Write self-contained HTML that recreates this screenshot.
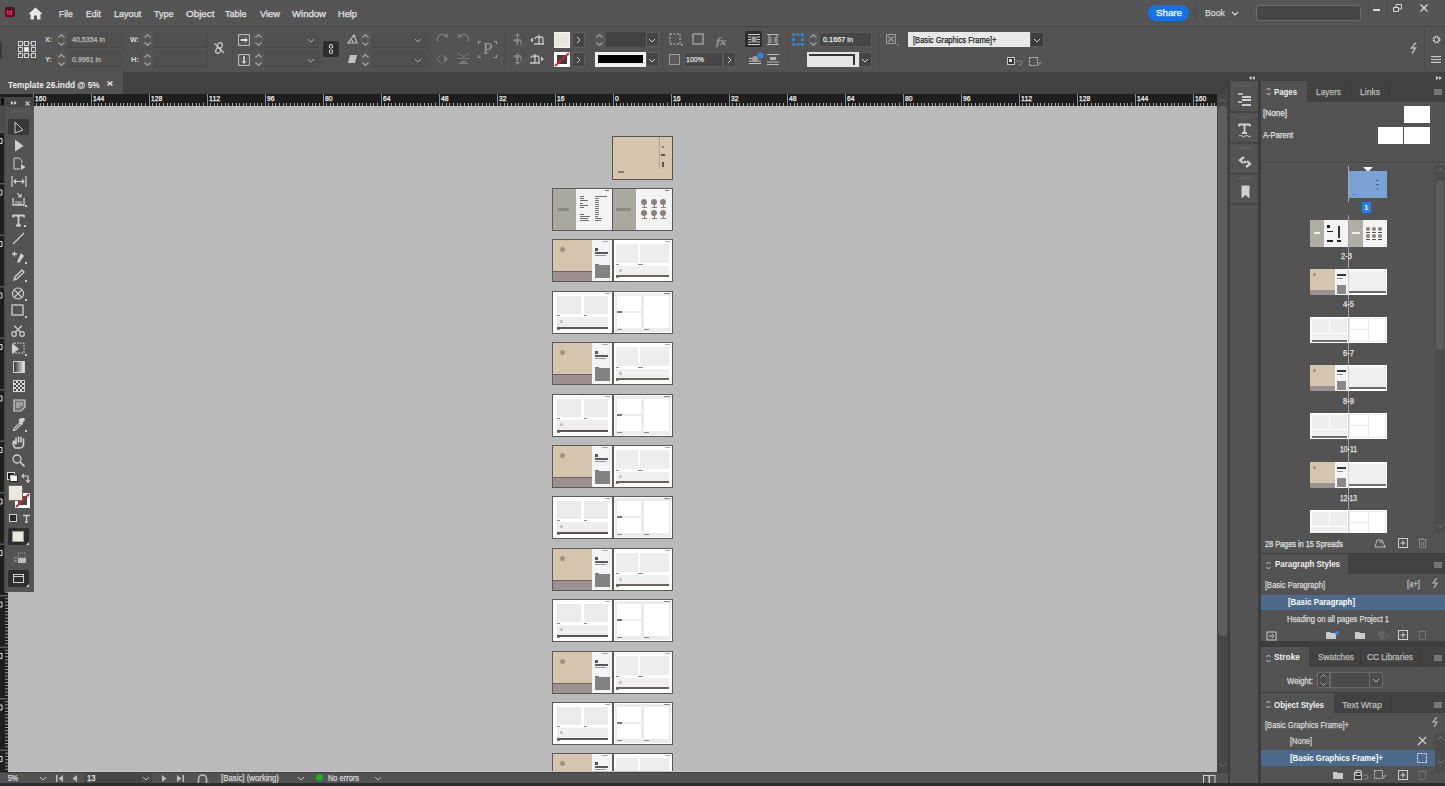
<!DOCTYPE html><html><head><meta charset="utf-8"><style>
*{margin:0;padding:0;box-sizing:border-box}
html,body{width:1445px;height:786px;overflow:hidden;background:#535353;font-family:"Liberation Sans",sans-serif;color:#d6d6d6;font-size:9px}
.a{position:absolute}
.t{position:absolute;white-space:nowrap;line-height:1;-webkit-text-stroke:0.25px currentColor}
</style></head><body>
<div class="a" style="left:0px;top:0px;width:1445px;height:26px;background:#555555;"></div>
<div class="a" style="left:0px;top:26px;width:1445px;height:1px;background:#464646;"></div>
<div class="a" style="left:5px;top:7px;width:10px;height:10px;background:#5e0b26;border-radius:2px"></div>
<div class="t" style="left:6.5px;top:10.00px;font-size:6.5px;color:#e0457a;font-weight:bold;-webkit-text-stroke:0;">Id</div>
<svg class="a" style="left:28px;top:7px;" width="15" height="13" viewBox="0 0 15 13"><path d="M7.5 0.5 L14.5 7 H12.5 V12.5 H9 V8.5 H6 V12.5 H2.5 V7 H0.5 Z" fill="#e6e6e6"/></svg>
<div class="t" style="left:59px;top:8.76px;font-size:9.5px;color:#e2e2e2;transform:scaleX(0.895);transform-origin:0 0;">File</div>
<div class="t" style="left:85.8px;top:8.76px;font-size:9.5px;color:#e2e2e2;transform:scaleX(0.904);transform-origin:0 0;">Edit</div>
<div class="t" style="left:113.6px;top:8.76px;font-size:9.5px;color:#e2e2e2;transform:scaleX(0.954);transform-origin:0 0;">Layout</div>
<div class="t" style="left:153.6px;top:8.76px;font-size:9.5px;color:#e2e2e2;transform:scaleX(0.947);transform-origin:0 0;">Type</div>
<div class="t" style="left:185.5px;top:8.76px;font-size:9.5px;color:#e2e2e2;transform:scaleX(1.038);transform-origin:0 0;">Object</div>
<div class="t" style="left:225px;top:8.76px;font-size:9.5px;color:#e2e2e2;transform:scaleX(0.947);transform-origin:0 0;">Table</div>
<div class="t" style="left:259.7px;top:8.76px;font-size:9.5px;color:#e2e2e2;transform:scaleX(0.979);transform-origin:0 0;">View</div>
<div class="t" style="left:292px;top:8.76px;font-size:9.5px;color:#e2e2e2;transform:scaleX(1.006);transform-origin:0 0;">Window</div>
<div class="t" style="left:338.3px;top:8.76px;font-size:9.5px;color:#e2e2e2;transform:scaleX(0.972);transform-origin:0 0;">Help</div>
<div class="a" style="left:1148px;top:5px;width:41px;height:16px;background:#1473e6;border-radius:8px"></div>
<div class="t" style="left:1155.5px;top:8.46px;font-size:9.5px;color:#ffffff;transform:scaleX(1.026);transform-origin:0 0;">Share</div>
<div class="a" style="left:1195px;top:4px;width:1px;height:18px;background:#4b4b4b;"></div>
<div class="t" style="left:1205px;top:8.46px;font-size:9.5px;color:#d8d8d8;transform:scaleX(0.924);transform-origin:0 0;">Book</div>
<svg class="a" style="left:1231px;top:11px;" width="8" height="5" viewBox="0 0 8 5"><path d="M1 1 L4 4 L7 1" stroke="#d8d8d8" stroke-width="1.2" fill="none"/></svg>
<div class="a" style="left:1250px;top:4px;width:1px;height:18px;background:#4b4b4b;"></div>
<div class="a" style="left:1256px;top:5px;width:105px;height:16px;background:#474747;border:1px solid #6c6c6c;border-radius:3px"></div>
<div class="a" style="left:1368px;top:1px;width:1px;height:14px;background:#4e4e4e;"></div>
<div class="a" style="left:1387px;top:1px;width:1px;height:14px;background:#4e4e4e;"></div>
<div class="a" style="left:1410px;top:1px;width:1px;height:14px;background:#4e4e4e;"></div>
<div class="a" style="left:1373px;top:9px;width:7px;height:2px;background:#d8d8d8;"></div>
<svg class="a" style="left:1393px;top:4px;" width="9" height="8" viewBox="0 0 9 8"><path d="M0.5 3.5 h5 v4 h-5z M3 3.5 v-3 h5.5 v4.5 h-3" stroke="#d8d8d8" stroke-width="1" fill="none"/></svg>
<svg class="a" style="left:1420px;top:4px;" width="8" height="8" viewBox="0 0 8 8"><path d="M0.5 0.5 L7.5 7.5 M7.5 0.5 L0.5 7.5" stroke="#d8d8d8" stroke-width="1.3"/></svg>
<div class="a" style="left:0px;top:27px;width:1445px;height:45px;background:#535353;"></div>
<div class="a" style="left:0px;top:41px;width:2px;height:18px;background:#3c3c3c;"></div>
<svg class="a" style="left:17.5px;top:41.0px;" width="5" height="5" viewBox="0 0 5 5"><rect x="0.5" y="0.5" width="4" height="4" stroke="#d0d0d0" stroke-width="1" fill="none"/></svg>
<svg class="a" style="left:17.5px;top:47.0px;" width="5" height="5" viewBox="0 0 5 5"><rect x="0.5" y="0.5" width="4" height="4" stroke="#d0d0d0" stroke-width="1" fill="none"/></svg>
<svg class="a" style="left:17.5px;top:53.0px;" width="5" height="5" viewBox="0 0 5 5"><rect x="0.5" y="0.5" width="4" height="4" stroke="#d0d0d0" stroke-width="1" fill="none"/></svg>
<svg class="a" style="left:24.2px;top:41.0px;" width="5" height="5" viewBox="0 0 5 5"><rect x="0.5" y="0.5" width="4" height="4" stroke="#d0d0d0" stroke-width="1" fill="none"/></svg>
<svg class="a" style="left:24.2px;top:47.0px;" width="5" height="5" viewBox="0 0 5 5"><rect x="0.5" y="0.5" width="4" height="4" stroke="#d0d0d0" stroke-width="1" fill="#ffffff"/></svg>
<svg class="a" style="left:24.2px;top:53.0px;" width="5" height="5" viewBox="0 0 5 5"><rect x="0.5" y="0.5" width="4" height="4" stroke="#d0d0d0" stroke-width="1" fill="none"/></svg>
<svg class="a" style="left:30.9px;top:41.0px;" width="5" height="5" viewBox="0 0 5 5"><rect x="0.5" y="0.5" width="4" height="4" stroke="#d0d0d0" stroke-width="1" fill="none"/></svg>
<svg class="a" style="left:30.9px;top:47.0px;" width="5" height="5" viewBox="0 0 5 5"><rect x="0.5" y="0.5" width="4" height="4" stroke="#d0d0d0" stroke-width="1" fill="none"/></svg>
<svg class="a" style="left:30.9px;top:53.0px;" width="5" height="5" viewBox="0 0 5 5"><rect x="0.5" y="0.5" width="4" height="4" stroke="#d0d0d0" stroke-width="1" fill="none"/></svg>
<svg class="a" style="left:17px;top:40px;" width="20" height="20" viewBox="0 0 20 20"><path d="M5 3h2 M12 3h2 M5 15h2 M12 15h2 M3 6v1 M3 12v1 M16 6v1 M16 12v1" stroke="#bbb" stroke-width="1"/></svg>
<div class="t" style="left:44.5px;top:36.23px;font-size:8px;color:#d8d8d8;font-weight:bold;-webkit-text-stroke:0;transform:scaleX(0.875);transform-origin:0 0;">X:</div>
<div class="t" style="left:44.5px;top:56.23px;font-size:8px;color:#d8d8d8;font-weight:bold;-webkit-text-stroke:0;transform:scaleX(0.945);transform-origin:0 0;">Y:</div>
<div class="a" style="left:56px;top:32px;width:11px;height:14px;background:#575757;border-radius:2px"></div>
<svg class="a" style="left:58px;top:34px;" width="7" height="4" viewBox="0 0 7 4"><path d="M0.5 3.5 L3.5 0.7 L6.5 3.5" stroke="#a8a8a8" stroke-width="1.1" fill="none"/></svg>
<svg class="a" style="left:58px;top:41.5px;" width="7" height="4" viewBox="0 0 7 4"><path d="M0.5 0.5 L3.5 3.3 L6.5 0.5" stroke="#a8a8a8" stroke-width="1.1" fill="none"/></svg>
<div class="a" style="left:56px;top:52px;width:11px;height:14px;background:#575757;border-radius:2px"></div>
<svg class="a" style="left:58px;top:54px;" width="7" height="4" viewBox="0 0 7 4"><path d="M0.5 3.5 L3.5 0.7 L6.5 3.5" stroke="#a8a8a8" stroke-width="1.1" fill="none"/></svg>
<svg class="a" style="left:58px;top:61.5px;" width="7" height="4" viewBox="0 0 7 4"><path d="M0.5 0.5 L3.5 3.3 L6.5 0.5" stroke="#a8a8a8" stroke-width="1.1" fill="none"/></svg>
<div class="a" style="left:67px;top:31.5px;width:54px;height:16px;background:#505050;border-bottom:1.5px solid #474747;border-right:1px solid #4c4c4c"></div>
<div class="a" style="left:67px;top:51px;width:54px;height:16px;background:#505050;border-bottom:1.5px solid #474747;border-right:1px solid #4c4c4c"></div>
<div class="t" style="left:72px;top:36.23px;font-size:8px;color:#bcbcbc;transform:scaleX(0.883);transform-origin:0 0;">40.5354 in</div>
<div class="t" style="left:72px;top:56.23px;font-size:8px;color:#bcbcbc;transform:scaleX(0.881);transform-origin:0 0;">0.9961 in</div>
<div class="t" style="left:130px;top:36.23px;font-size:8px;color:#d8d8d8;font-weight:bold;-webkit-text-stroke:0;transform:scaleX(0.894);transform-origin:0 0;">W:</div>
<div class="t" style="left:130.5px;top:56.23px;font-size:8px;color:#d8d8d8;font-weight:bold;-webkit-text-stroke:0;transform:scaleX(0.948);transform-origin:0 0;">H:</div>
<div class="a" style="left:142px;top:32px;width:11px;height:14px;background:#575757;border-radius:2px"></div>
<svg class="a" style="left:144px;top:34px;" width="7" height="4" viewBox="0 0 7 4"><path d="M0.5 3.5 L3.5 0.7 L6.5 3.5" stroke="#a8a8a8" stroke-width="1.1" fill="none"/></svg>
<svg class="a" style="left:144px;top:41.5px;" width="7" height="4" viewBox="0 0 7 4"><path d="M0.5 0.5 L3.5 3.3 L6.5 0.5" stroke="#a8a8a8" stroke-width="1.1" fill="none"/></svg>
<div class="a" style="left:142px;top:52px;width:11px;height:14px;background:#575757;border-radius:2px"></div>
<svg class="a" style="left:144px;top:54px;" width="7" height="4" viewBox="0 0 7 4"><path d="M0.5 3.5 L3.5 0.7 L6.5 3.5" stroke="#a8a8a8" stroke-width="1.1" fill="none"/></svg>
<svg class="a" style="left:144px;top:61.5px;" width="7" height="4" viewBox="0 0 7 4"><path d="M0.5 0.5 L3.5 3.3 L6.5 0.5" stroke="#a8a8a8" stroke-width="1.1" fill="none"/></svg>
<div class="a" style="left:153px;top:31.5px;width:54px;height:16px;background:#505050;border-bottom:1.5px solid #474747;border-right:1px solid #4c4c4c"></div>
<div class="a" style="left:153px;top:51px;width:54px;height:16px;background:#505050;border-bottom:1.5px solid #474747;border-right:1px solid #4c4c4c"></div>
<div class="a" style="left:207px;top:30px;width:1px;height:39px;background:#4c4c4c;"></div>
<svg class="a" style="left:212px;top:41px;" width="14" height="14" viewBox="0 0 14 14"><g transform="rotate(20 7 7)"><rect x="4.8" y="1.5" width="4.4" height="5.6" rx="2.2" stroke="#c8c8c8" stroke-width="1.2" fill="none"/><rect x="4.8" y="6.9" width="4.4" height="5.6" rx="2.2" stroke="#c8c8c8" stroke-width="1.2" fill="none"/></g><path d="M2.5 2.5 L12 12" stroke="#c8c8c8" stroke-width="1.3"/></svg>
<div class="a" style="left:232px;top:30px;width:1px;height:39px;background:#4c4c4c;"></div>
<svg class="a" style="left:238px;top:34px;" width="12" height="12" viewBox="0 0 12 12"><rect x="0.6" y="0.6" width="10.8" height="10.8" stroke="#bdbdbd" stroke-width="1.1" fill="#4a4a4a"/><path d="M2.5 6h5.5" stroke="#e0e0e0" stroke-width="2"/><path d="M7.5 3.5 L10 6 L7.5 8.5 Z" fill="#e0e0e0"/><path d="M2.5 3h7 M2.5 9h7" stroke="#777" stroke-width="0.8"/></svg>
<svg class="a" style="left:238px;top:54px;" width="12" height="12" viewBox="0 0 12 12"><rect x="0.6" y="0.6" width="10.8" height="10.8" stroke="#bdbdbd" stroke-width="1.1" fill="#4a4a4a"/><path d="M6 2v6" stroke="#e0e0e0" stroke-width="1.6"/><path d="M3.5 7.5 L6 10 L8.5 7.5 Z" fill="#e0e0e0"/><path d="M3 2.5v7 M9 2.5v7" stroke="#777" stroke-width="0.8"/></svg>
<div class="a" style="left:253px;top:32px;width:11px;height:14px;background:#575757;border-radius:2px"></div>
<svg class="a" style="left:255px;top:34px;" width="7" height="4" viewBox="0 0 7 4"><path d="M0.5 3.5 L3.5 0.7 L6.5 3.5" stroke="#a8a8a8" stroke-width="1.1" fill="none"/></svg>
<svg class="a" style="left:255px;top:41.5px;" width="7" height="4" viewBox="0 0 7 4"><path d="M0.5 0.5 L3.5 3.3 L6.5 0.5" stroke="#a8a8a8" stroke-width="1.1" fill="none"/></svg>
<div class="a" style="left:253px;top:52px;width:11px;height:14px;background:#575757;border-radius:2px"></div>
<svg class="a" style="left:255px;top:54px;" width="7" height="4" viewBox="0 0 7 4"><path d="M0.5 3.5 L3.5 0.7 L6.5 3.5" stroke="#a8a8a8" stroke-width="1.1" fill="none"/></svg>
<svg class="a" style="left:255px;top:61.5px;" width="7" height="4" viewBox="0 0 7 4"><path d="M0.5 0.5 L3.5 3.3 L6.5 0.5" stroke="#a8a8a8" stroke-width="1.1" fill="none"/></svg>
<div class="a" style="left:264px;top:31.5px;width:55px;height:16px;background:#505050;border-bottom:1.5px solid #474747;border-right:1px solid #4c4c4c"></div>
<div class="a" style="left:264px;top:51px;width:55px;height:16px;background:#505050;border-bottom:1.5px solid #474747;border-right:1px solid #4c4c4c"></div>
<svg class="a" style="left:307px;top:38px;" width="8" height="5" viewBox="0 0 8 5"><path d="M1 1 L4 4 L7 1" stroke="#a8a8a8" stroke-width="1.0" fill="none"/></svg>
<svg class="a" style="left:307px;top:58px;" width="8" height="5" viewBox="0 0 8 5"><path d="M1 1 L4 4 L7 1" stroke="#a8a8a8" stroke-width="1.0" fill="none"/></svg>
<div class="a" style="left:323px;top:41px;width:16px;height:16px;background:#2e2e2e;border-radius:2px"></div>
<svg class="a" style="left:327px;top:43px;" width="8" height="12" viewBox="0 0 8 12"><path d="M2.5 5 V3 a1.5 1.5 0 0 1 3 0 V5 M2.5 7 V9 a1.5 1.5 0 0 0 3 0 V7 M4 4.5 V7.5" stroke="#d8d8d8" stroke-width="1.1" fill="none"/></svg>
<svg class="a" style="left:347px;top:34px;" width="11" height="10" viewBox="0 0 11 10"><path d="M1 9 L10 9 L7 1 Z M6 9 a3 3 0 0 0 -1.5 -3" stroke="#c0c0c0" stroke-width="1.2" fill="none"/></svg>
<svg class="a" style="left:347px;top:54px;" width="11" height="10" viewBox="0 0 11 10"><path d="M3 1 H10 L8 9 H1 Z" fill="#c0c0c0"/></svg>
<div class="a" style="left:360px;top:32px;width:11px;height:14px;background:#575757;border-radius:2px"></div>
<svg class="a" style="left:362px;top:34px;" width="7" height="4" viewBox="0 0 7 4"><path d="M0.5 3.5 L3.5 0.7 L6.5 3.5" stroke="#a8a8a8" stroke-width="1.1" fill="none"/></svg>
<svg class="a" style="left:362px;top:41.5px;" width="7" height="4" viewBox="0 0 7 4"><path d="M0.5 0.5 L3.5 3.3 L6.5 0.5" stroke="#a8a8a8" stroke-width="1.1" fill="none"/></svg>
<div class="a" style="left:360px;top:52px;width:11px;height:14px;background:#575757;border-radius:2px"></div>
<svg class="a" style="left:362px;top:54px;" width="7" height="4" viewBox="0 0 7 4"><path d="M0.5 3.5 L3.5 0.7 L6.5 3.5" stroke="#a8a8a8" stroke-width="1.1" fill="none"/></svg>
<svg class="a" style="left:362px;top:61.5px;" width="7" height="4" viewBox="0 0 7 4"><path d="M0.5 0.5 L3.5 3.3 L6.5 0.5" stroke="#a8a8a8" stroke-width="1.1" fill="none"/></svg>
<div class="a" style="left:371px;top:31.5px;width:55px;height:16px;background:#505050;border-bottom:1.5px solid #474747;border-right:1px solid #4c4c4c"></div>
<div class="a" style="left:371px;top:51px;width:55px;height:16px;background:#505050;border-bottom:1.5px solid #474747;border-right:1px solid #4c4c4c"></div>
<svg class="a" style="left:414px;top:38px;" width="8" height="5" viewBox="0 0 8 5"><path d="M1 1 L4 4 L7 1" stroke="#a8a8a8" stroke-width="1.0" fill="none"/></svg>
<svg class="a" style="left:414px;top:58px;" width="8" height="5" viewBox="0 0 8 5"><path d="M1 1 L4 4 L7 1" stroke="#a8a8a8" stroke-width="1.0" fill="none"/></svg>
<div class="a" style="left:428px;top:30px;width:1px;height:39px;background:#4c4c4c;"></div>
<svg class="a" style="left:436px;top:33px;" width="13" height="10" viewBox="0 0 13 10"><path d="M2 9 A5 5 0 0 1 11 4 M8 3.5 L11.5 4 L11 0.5" stroke="#7c7c7c" stroke-width="1.3" fill="none"/></svg>
<svg class="a" style="left:457px;top:33px;" width="13" height="10" viewBox="0 0 13 10"><path d="M11 9 A5 5 0 0 0 2 4 M5 3.5 L1.5 4 L2 0.5" stroke="#7c7c7c" stroke-width="1.3" fill="none"/></svg>
<svg class="a" style="left:436px;top:54px;" width="13" height="10" viewBox="0 0 13 10"><path d="M5 1 L1 5 L5 9" stroke="#7c7c7c" fill="none"/><path d="M8 1 L12 5 L8 9 Z" fill="#7c7c7c"/></svg>
<svg class="a" style="left:457px;top:52px;" width="13" height="13" viewBox="0 0 13 13"><path d="M1 1 L6.5 5 L12 1" stroke="#7c7c7c" fill="none"/><path d="M1 12 L6.5 8 L12 12 Z" fill="#7c7c7c"/><path d="M0 6.5h13" stroke="#7c7c7c"/></svg>
<svg class="a" style="left:477px;top:40px;" width="21" height="20" viewBox="0 0 21 20"><path d="M1.5 4 V1.5 H4 M17 1.5 H19.5 V4 M1.5 15 V17.5 H4 M17 17.5 H19.5 V15" stroke="#9a9a9a" stroke-width="1.2" fill="none"/></svg>
<div class="t" style="left:483px;top:39.5px;font-size:17px;color:#9a9a9a;font-family:'Liberation Serif',serif;-webkit-text-stroke:0">P</div>
<div class="a" style="left:505px;top:30px;width:1px;height:39px;background:#4c4c4c;"></div>
<svg class="a" style="left:511px;top:33px;" width="13" height="13" viewBox="0 0 13 13"><path d="M6.5 0 L9 3 H4 Z" fill="#8c8c8c"/><path d="M6.5 3 V12 M3 8 a1.5 1.5 0 0 1 3 0 v4 M7 8 a1.5 1.5 0 0 1 3 0 v4 M2.5 8h8" stroke="#8c8c8c" stroke-width="1.1" fill="none"/></svg>
<svg class="a" style="left:511px;top:52px;" width="13" height="13" viewBox="0 0 13 13"><path d="M6.5 13 L9 10 H4 Z" fill="#8c8c8c"/><path d="M6.5 1 V10 M3 5 a1.5 1.5 0 0 1 3 0 v4 M7 5 a1.5 1.5 0 0 1 3 0 v4 M2.5 5h8" stroke="#8c8c8c" stroke-width="1.1" fill="none"/></svg>
<svg class="a" style="left:530px;top:35px;" width="14" height="10" viewBox="0 0 14 10"><path d="M0 5 L3 2.5 V7.5 Z" fill="#c8c8c8"/><path d="M5 4 a2 2 0 0 1 4 0 v5 M9 4 a2 2 0 0 1 4 0 v5 M9 0 v9 M4 9 h10" stroke="#c8c8c8" stroke-width="1.3" fill="none"/></svg>
<svg class="a" style="left:530px;top:54px;" width="14" height="10" viewBox="0 0 14 10"><path d="M14 5 L11 2.5 V7.5 Z" fill="#c8c8c8"/><path d="M1 4 a2 2 0 0 1 4 0 v5 M5 4 a2 2 0 0 1 4 0 v5 M5 0 v9 M0 9 h10" stroke="#c8c8c8" stroke-width="1.3" fill="none"/></svg>
<div class="a" style="left:554px;top:32px;width:16px;height:16px;background:#f3f3f3;"></div>
<div class="a" style="left:555px;top:33px;width:14px;height:14px;background:#e9e6dc;"></div>
<div class="a" style="left:554px;top:52px;width:16px;height:15px;background:#ffffff;"></div>
<div class="a" style="left:557px;top:55px;width:10px;height:9px;background:#3e3e3e;"></div>
<svg class="a" style="left:554px;top:52px;" width="16" height="15" viewBox="0 0 16 15"><path d="M1 14 L15 1" stroke="#d61f2c" stroke-width="1.8"/></svg>
<div class="a" style="left:572px;top:32px;width:13px;height:16px;background:#464646;border:1px solid #5e5e5e;border-radius:2px"></div>
<div class="a" style="left:572px;top:52px;width:13px;height:15px;background:#464646;border:1px solid #5e5e5e;border-radius:2px"></div>
<svg class="a" style="left:576px;top:36px;" width="5" height="8" viewBox="0 0 5 8"><path d="M1 1 L4 4 L1 7" stroke="#cfcfcf" fill="none"/></svg>
<svg class="a" style="left:576px;top:56px;" width="5" height="8" viewBox="0 0 5 8"><path d="M1 1 L4 4 L1 7" stroke="#cfcfcf" fill="none"/></svg>
<div class="a" style="left:594px;top:32px;width:11px;height:15px;background:#575757;border-radius:2px"></div>
<svg class="a" style="left:596px;top:34px;" width="7" height="4" viewBox="0 0 7 4"><path d="M0.5 3.5 L3.5 0.7 L6.5 3.5" stroke="#a8a8a8" stroke-width="1.1" fill="none"/></svg>
<svg class="a" style="left:596px;top:41.5px;" width="7" height="4" viewBox="0 0 7 4"><path d="M0.5 0.5 L3.5 3.3 L6.5 0.5" stroke="#a8a8a8" stroke-width="1.1" fill="none"/></svg>
<div class="a" style="left:606px;top:32px;width:40px;height:15px;background:#424242;"></div>
<div class="a" style="left:646px;top:32px;width:13px;height:15px;background:#464646;border:1px solid #5e5e5e"></div>
<svg class="a" style="left:648px;top:38px;" width="8" height="5" viewBox="0 0 8 5"><path d="M1 1 L4 4 L7 1" stroke="#cfcfcf" stroke-width="1.0" fill="none"/></svg>
<div class="a" style="left:595px;top:52px;width:51px;height:15px;background:#f0f0f0;"></div>
<div class="a" style="left:598px;top:55px;width:45px;height:7.5px;background:#000000;"></div>
<div class="a" style="left:646px;top:52px;width:13px;height:15px;background:#464646;border:1px solid #5e5e5e"></div>
<svg class="a" style="left:648px;top:58px;" width="8" height="5" viewBox="0 0 8 5"><path d="M1 1 L4 4 L7 1" stroke="#cfcfcf" stroke-width="1.0" fill="none"/></svg>
<div class="a" style="left:662px;top:30px;width:1px;height:39px;background:#4c4c4c;"></div>
<svg class="a" style="left:669px;top:33px;" width="14" height="13" viewBox="0 0 14 13"><rect x="1" y="1" width="10" height="10" stroke="#c8c8c8" stroke-dasharray="2 1.5" fill="none"/><rect x="12" y="11" width="1.5" height="1.5" fill="#c8c8c8"/></svg>
<svg class="a" style="left:692px;top:33px;" width="12" height="12" viewBox="0 0 12 12"><rect x="1" y="1" width="10" height="10" stroke="#b0b0b0" stroke-width="1.2" fill="none"/></svg>
<div class="t" style="left:716px;top:35.69px;font-size:11px;color:#9a9a9a;transform:scaleX(1.286);transform-origin:0 0;font-style:italic;font-family:'Liberation Serif',serif">fx</div>
<svg class="a" style="left:669px;top:54px;" width="11" height="11" viewBox="0 0 11 11"><rect x="0.5" y="0.5" width="10" height="10" stroke="#9a9a9a" fill="#5a5a5a"/></svg>
<div class="a" style="left:684px;top:52px;width:39px;height:15px;background:#464646;border:1px solid #5a5a5a"></div>
<div class="t" style="left:686px;top:55.73px;font-size:8px;color:#e0e0e0;transform:scaleX(0.880);transform-origin:0 0;">100%</div>
<div class="a" style="left:723px;top:52px;width:13px;height:15px;background:#464646;border:1px solid #5a5a5a"></div>
<svg class="a" style="left:727px;top:56px;" width="5" height="8" viewBox="0 0 5 8"><path d="M1 1 L4 4 L1 7" stroke="#cfcfcf" fill="none"/></svg>
<div class="a" style="left:741px;top:30px;width:1px;height:39px;background:#4c4c4c;"></div>
<div class="a" style="left:745px;top:31px;width:17px;height:16px;background:#2e2e2e;border-radius:2px"></div>
<svg class="a" style="left:748px;top:34px;" width="12" height="11" viewBox="0 0 12 11"><path d="M0 0.5h12 M0 10.5h12 M0 3h3 M9 3h3 M0 5.5h3 M9 5.5h3 M0 8h3 M9 8h3" stroke="#d0d0d0"/><rect x="3.5" y="2.5" width="5" height="6" fill="#9a9a9a"/></svg>
<svg class="a" style="left:767px;top:34px;" width="12" height="11" viewBox="0 0 12 11"><path d="M0 0.5h12 M0 10.5h12 M2 1v9 M10 1v9 M4 3v6 M8 3v6" stroke="#b8b8b8"/></svg>
<svg class="a" style="left:749px;top:52px;" width="15" height="13" viewBox="0 0 15 13"><path d="M0 6.5h3 M0 9h12 M0 11.5h12" stroke="#c0c0c0"/><circle cx="6" cy="7" r="3" fill="#a0a0a0"/><circle cx="11.5" cy="3.5" r="3" fill="#2e86f0"/></svg>
<svg class="a" style="left:767px;top:54px;" width="12" height="11" viewBox="0 0 12 11"><path d="M0 0.5h12 M0 10.5h12 M0 8h12" stroke="#b8b8b8"/><rect x="3" y="3" width="6" height="3" fill="#b8b8b8"/></svg>
<div class="a" style="left:788px;top:30px;width:1px;height:39px;background:#4c4c4c;"></div>
<svg class="a" style="left:792px;top:33px;" width="12" height="13" viewBox="0 0 12 13"><path d="M2 2h8v9h-8z" stroke="#3d6f9c" fill="none"/><rect x="0" y="0" width="3" height="3" fill="#2f80d0"/><rect x="9" y="0" width="3" height="3" fill="#2f80d0"/><rect x="0" y="10" width="3" height="3" fill="#2f80d0"/><rect x="9" y="10" width="3" height="3" fill="#2f80d0"/><rect x="4.5" y="0" width="3" height="3" fill="#2f80d0"/><rect x="4.5" y="10" width="3" height="3" fill="#2f80d0"/><rect x="0" y="5" width="3" height="3" fill="#2f80d0"/><rect x="9" y="5" width="3" height="3" fill="#2f80d0"/></svg>
<div class="a" style="left:808px;top:32px;width:11px;height:15px;background:#575757;border-radius:2px"></div>
<svg class="a" style="left:810px;top:34px;" width="7" height="4" viewBox="0 0 7 4"><path d="M0.5 3.5 L3.5 0.7 L6.5 3.5" stroke="#a8a8a8" stroke-width="1.1" fill="none"/></svg>
<svg class="a" style="left:810px;top:41.5px;" width="7" height="4" viewBox="0 0 7 4"><path d="M0.5 0.5 L3.5 3.3 L6.5 0.5" stroke="#a8a8a8" stroke-width="1.1" fill="none"/></svg>
<div class="a" style="left:819px;top:32px;width:53px;height:15px;background:#464646;border:1px solid #5a5a5a"></div>
<div class="t" style="left:823px;top:36.23px;font-size:8px;color:#e6e6e6;transform:scaleX(0.911);transform-origin:0 0;">0.1667 in</div>
<div class="a" style="left:807px;top:52px;width:52px;height:15px;background:#e6e6e6;"></div>
<div class="a" style="left:809px;top:54px;width:46px;height:2px;background:#333;"></div>
<div class="a" style="left:853px;top:54px;width:2px;height:11px;background:#333;"></div>
<div class="a" style="left:859px;top:52px;width:13px;height:15px;background:#464646;border:1px solid #5a5a5a"></div>
<svg class="a" style="left:861px;top:58px;" width="8" height="5" viewBox="0 0 8 5"><path d="M1 1 L4 4 L7 1" stroke="#cfcfcf" stroke-width="1.0" fill="none"/></svg>
<div class="a" style="left:878px;top:30px;width:1px;height:39px;background:#4c4c4c;"></div>
<svg class="a" style="left:886px;top:34px;" width="13" height="12" viewBox="0 0 13 12"><rect x="0.5" y="0.5" width="9" height="9" stroke="#9a9a9a" fill="none"/><path d="M2 2 L8 8 M8 2 L2 8" stroke="#9a9a9a" stroke-width="1.3"/><rect x="11" y="10" width="1.5" height="1.5" fill="#9a9a9a"/></svg>
<div class="a" style="left:908px;top:32px;width:122px;height:15px;background:#e8e8e8;"></div>
<div class="t" style="left:913px;top:36.30px;font-size:8.5px;color:#1e1e1e;transform:scaleX(0.891);transform-origin:0 0;">[Basic Graphics Frame]+</div>
<div class="a" style="left:1030px;top:32px;width:14px;height:15px;background:#3e3e3e;border:1px solid #5a5a5a"></div>
<svg class="a" style="left:1033px;top:38px;" width="8" height="5" viewBox="0 0 8 5"><path d="M1 1 L4 4 L7 1" stroke="#cfcfcf" stroke-width="1.0" fill="none"/></svg>
<svg class="a" style="left:1007px;top:57px;" width="16" height="10" viewBox="0 0 16 10"><rect x="0.5" y="0.5" width="7" height="7" stroke="#c8c8c8" fill="#333"/><rect x="2" y="2" width="3" height="3" fill="#ddd"/><path d="M9 4h4 a2 2 0 0 1 0 4 h-2" stroke="#888" fill="none"/></svg>
<svg class="a" style="left:1029px;top:57px;" width="13" height="10" viewBox="0 0 13 10"><rect x="0.5" y="0.5" width="8" height="8" stroke="#c8c8c8" stroke-dasharray="2 1" fill="none"/><path d="M9 8 L12 5" stroke="#888" stroke-width="1.5"/></svg>
<svg class="a" style="left:1410px;top:42px;" width="8" height="12" viewBox="0 0 8 12"><path d="M6 0.5 L1.5 6 L5.5 6 L2 11.5" stroke="#bdbdbd" stroke-width="1.4" fill="none"/></svg>
<div class="a" style="left:1424px;top:30px;width:1px;height:40px;background:#4a4a4a;"></div>
<svg class="a" style="left:1432px;top:35px;" width="9" height="9" viewBox="0 0 9 9"><circle cx="4.5" cy="4.5" r="2.8" stroke="#d0d0d0" stroke-width="2.2" fill="none" stroke-dasharray="1.5 0.7"/><circle cx="4.5" cy="4.5" r="1.2" fill="#535353"/></svg>
<svg class="a" style="left:1431px;top:56px;" width="10" height="7" viewBox="0 0 10 7"><path d="M0 0.7h10 M0 3.5h10 M0 6.3h10" stroke="#c4c4c4" stroke-width="1.2"/></svg>
<div class="a" style="left:0px;top:72px;width:1228px;height:22px;background:#424242;"></div>
<div class="a" style="left:0px;top:72px;width:123px;height:22px;background:#535353;"></div>
<div class="t" style="left:8.2px;top:79.96px;font-size:9.5px;color:#ececec;font-weight:bold;-webkit-text-stroke:0;transform:scaleX(0.872);transform-origin:0 0;">Template 26.indd @ 5%</div>
<svg class="a" style="left:107px;top:81px;" width="6" height="5" viewBox="0 0 6 5"><path d="M0.5 0.5 L5.5 4.5 M5.5 0.5 L0.5 4.5" stroke="#e6e6e6" stroke-width="1.4"/></svg>
<div class="a" style="left:0px;top:94px;width:1217px;height:12px;background:#1f1f1f;"></div>
<div class="a" style="left:0px;top:94px;width:8px;height:678px;background:#1f1f1f;"></div>
<div class="a" style="left:0px;top:106px;width:5px;height:26px;background:#4d4d4d;"></div>
<svg class="a" style="left:0px;top:0px;" width="8" height="786" viewBox="0 0 8 786"><rect x="0" y="131.5" width="8" height="1.5" fill="#5a5a5a"/><path d="M-1 138.5 h3 v5 h-3" stroke="#e0e0e0" stroke-width="1" fill="none"/><rect x="5" y="134.7" width="3" height="1" fill="#9a9a9a"/><rect x="5" y="137.9" width="3" height="1" fill="#9a9a9a"/><rect x="5" y="141.2" width="3" height="1" fill="#9a9a9a"/><rect x="5" y="144.4" width="3" height="1" fill="#9a9a9a"/><rect x="5" y="147.6" width="3" height="1" fill="#9a9a9a"/><rect x="5" y="150.8" width="3" height="1" fill="#9a9a9a"/><rect x="5" y="154.0" width="3" height="1" fill="#9a9a9a"/><rect x="5" y="157.2" width="3" height="1" fill="#9a9a9a"/><rect x="5" y="160.5" width="3" height="1" fill="#9a9a9a"/><rect x="5" y="163.7" width="3" height="1" fill="#9a9a9a"/><rect x="5" y="166.9" width="3" height="1" fill="#9a9a9a"/><rect x="5" y="170.1" width="3" height="1" fill="#9a9a9a"/><rect x="5" y="173.3" width="3" height="1" fill="#9a9a9a"/><rect x="5" y="176.6" width="3" height="1" fill="#9a9a9a"/><rect x="5" y="179.8" width="3" height="1" fill="#9a9a9a"/><rect x="0" y="183.0" width="8" height="1.5" fill="#5a5a5a"/><path d="M-1 190.0 h3 v5 h-3" stroke="#e0e0e0" stroke-width="1" fill="none"/><rect x="5" y="186.2" width="3" height="1" fill="#9a9a9a"/><rect x="5" y="189.4" width="3" height="1" fill="#9a9a9a"/><rect x="5" y="192.7" width="3" height="1" fill="#9a9a9a"/><rect x="5" y="195.9" width="3" height="1" fill="#9a9a9a"/><rect x="5" y="199.1" width="3" height="1" fill="#9a9a9a"/><rect x="5" y="202.3" width="3" height="1" fill="#9a9a9a"/><rect x="5" y="205.5" width="3" height="1" fill="#9a9a9a"/><rect x="5" y="208.8" width="3" height="1" fill="#9a9a9a"/><rect x="5" y="212.0" width="3" height="1" fill="#9a9a9a"/><rect x="5" y="215.2" width="3" height="1" fill="#9a9a9a"/><rect x="5" y="218.4" width="3" height="1" fill="#9a9a9a"/><rect x="5" y="221.6" width="3" height="1" fill="#9a9a9a"/><rect x="5" y="224.8" width="3" height="1" fill="#9a9a9a"/><rect x="5" y="228.1" width="3" height="1" fill="#9a9a9a"/><rect x="5" y="231.3" width="3" height="1" fill="#9a9a9a"/><rect x="0" y="234.5" width="8" height="1.5" fill="#5a5a5a"/><path d="M-1 241.5 h3 v5 h-3" stroke="#e0e0e0" stroke-width="1" fill="none"/><rect x="5" y="237.7" width="3" height="1" fill="#9a9a9a"/><rect x="5" y="240.9" width="3" height="1" fill="#9a9a9a"/><rect x="5" y="244.2" width="3" height="1" fill="#9a9a9a"/><rect x="5" y="247.4" width="3" height="1" fill="#9a9a9a"/><rect x="5" y="250.6" width="3" height="1" fill="#9a9a9a"/><rect x="5" y="253.8" width="3" height="1" fill="#9a9a9a"/><rect x="5" y="257.0" width="3" height="1" fill="#9a9a9a"/><rect x="5" y="260.2" width="3" height="1" fill="#9a9a9a"/><rect x="5" y="263.5" width="3" height="1" fill="#9a9a9a"/><rect x="5" y="266.7" width="3" height="1" fill="#9a9a9a"/><rect x="5" y="269.9" width="3" height="1" fill="#9a9a9a"/><rect x="5" y="273.1" width="3" height="1" fill="#9a9a9a"/><rect x="5" y="276.3" width="3" height="1" fill="#9a9a9a"/><rect x="5" y="279.6" width="3" height="1" fill="#9a9a9a"/><rect x="5" y="282.8" width="3" height="1" fill="#9a9a9a"/><rect x="0" y="286.0" width="8" height="1.5" fill="#5a5a5a"/><path d="M-1 293.0 h3 v5 h-3" stroke="#e0e0e0" stroke-width="1" fill="none"/><rect x="5" y="289.2" width="3" height="1" fill="#9a9a9a"/><rect x="5" y="292.4" width="3" height="1" fill="#9a9a9a"/><rect x="5" y="295.7" width="3" height="1" fill="#9a9a9a"/><rect x="5" y="298.9" width="3" height="1" fill="#9a9a9a"/><rect x="5" y="302.1" width="3" height="1" fill="#9a9a9a"/><rect x="5" y="305.3" width="3" height="1" fill="#9a9a9a"/><rect x="5" y="308.5" width="3" height="1" fill="#9a9a9a"/><rect x="5" y="311.8" width="3" height="1" fill="#9a9a9a"/><rect x="5" y="315.0" width="3" height="1" fill="#9a9a9a"/><rect x="5" y="318.2" width="3" height="1" fill="#9a9a9a"/><rect x="5" y="321.4" width="3" height="1" fill="#9a9a9a"/><rect x="5" y="324.6" width="3" height="1" fill="#9a9a9a"/><rect x="5" y="327.8" width="3" height="1" fill="#9a9a9a"/><rect x="5" y="331.1" width="3" height="1" fill="#9a9a9a"/><rect x="5" y="334.3" width="3" height="1" fill="#9a9a9a"/><rect x="0" y="337.5" width="8" height="1.5" fill="#5a5a5a"/><path d="M-1 344.5 h3 v5 h-3" stroke="#e0e0e0" stroke-width="1" fill="none"/><rect x="5" y="340.7" width="3" height="1" fill="#9a9a9a"/><rect x="5" y="343.9" width="3" height="1" fill="#9a9a9a"/><rect x="5" y="347.2" width="3" height="1" fill="#9a9a9a"/><rect x="5" y="350.4" width="3" height="1" fill="#9a9a9a"/><rect x="5" y="353.6" width="3" height="1" fill="#9a9a9a"/><rect x="5" y="356.8" width="3" height="1" fill="#9a9a9a"/><rect x="5" y="360.0" width="3" height="1" fill="#9a9a9a"/><rect x="5" y="363.2" width="3" height="1" fill="#9a9a9a"/><rect x="5" y="366.5" width="3" height="1" fill="#9a9a9a"/><rect x="5" y="369.7" width="3" height="1" fill="#9a9a9a"/><rect x="5" y="372.9" width="3" height="1" fill="#9a9a9a"/><rect x="5" y="376.1" width="3" height="1" fill="#9a9a9a"/><rect x="5" y="379.3" width="3" height="1" fill="#9a9a9a"/><rect x="5" y="382.6" width="3" height="1" fill="#9a9a9a"/><rect x="5" y="385.8" width="3" height="1" fill="#9a9a9a"/><rect x="0" y="389.0" width="8" height="1.5" fill="#5a5a5a"/><path d="M-1 396.0 h3 v5 h-3" stroke="#e0e0e0" stroke-width="1" fill="none"/><rect x="5" y="392.2" width="3" height="1" fill="#9a9a9a"/><rect x="5" y="395.4" width="3" height="1" fill="#9a9a9a"/><rect x="5" y="398.7" width="3" height="1" fill="#9a9a9a"/><rect x="5" y="401.9" width="3" height="1" fill="#9a9a9a"/><rect x="5" y="405.1" width="3" height="1" fill="#9a9a9a"/><rect x="5" y="408.3" width="3" height="1" fill="#9a9a9a"/><rect x="5" y="411.5" width="3" height="1" fill="#9a9a9a"/><rect x="5" y="414.8" width="3" height="1" fill="#9a9a9a"/><rect x="5" y="418.0" width="3" height="1" fill="#9a9a9a"/><rect x="5" y="421.2" width="3" height="1" fill="#9a9a9a"/><rect x="5" y="424.4" width="3" height="1" fill="#9a9a9a"/><rect x="5" y="427.6" width="3" height="1" fill="#9a9a9a"/><rect x="5" y="430.8" width="3" height="1" fill="#9a9a9a"/><rect x="5" y="434.1" width="3" height="1" fill="#9a9a9a"/><rect x="5" y="437.3" width="3" height="1" fill="#9a9a9a"/><rect x="0" y="440.5" width="8" height="1.5" fill="#5a5a5a"/><path d="M-1 447.5 h3 v5 h-3" stroke="#e0e0e0" stroke-width="1" fill="none"/><rect x="5" y="443.7" width="3" height="1" fill="#9a9a9a"/><rect x="5" y="446.9" width="3" height="1" fill="#9a9a9a"/><rect x="5" y="450.2" width="3" height="1" fill="#9a9a9a"/><rect x="5" y="453.4" width="3" height="1" fill="#9a9a9a"/><rect x="5" y="456.6" width="3" height="1" fill="#9a9a9a"/><rect x="5" y="459.8" width="3" height="1" fill="#9a9a9a"/><rect x="5" y="463.0" width="3" height="1" fill="#9a9a9a"/><rect x="5" y="466.2" width="3" height="1" fill="#9a9a9a"/><rect x="5" y="469.5" width="3" height="1" fill="#9a9a9a"/><rect x="5" y="472.7" width="3" height="1" fill="#9a9a9a"/><rect x="5" y="475.9" width="3" height="1" fill="#9a9a9a"/><rect x="5" y="479.1" width="3" height="1" fill="#9a9a9a"/><rect x="5" y="482.3" width="3" height="1" fill="#9a9a9a"/><rect x="5" y="485.6" width="3" height="1" fill="#9a9a9a"/><rect x="5" y="488.8" width="3" height="1" fill="#9a9a9a"/><rect x="0" y="492.0" width="8" height="1.5" fill="#5a5a5a"/><path d="M-1 499.0 h3 v5 h-3" stroke="#e0e0e0" stroke-width="1" fill="none"/><rect x="5" y="495.2" width="3" height="1" fill="#9a9a9a"/><rect x="5" y="498.4" width="3" height="1" fill="#9a9a9a"/><rect x="5" y="501.7" width="3" height="1" fill="#9a9a9a"/><rect x="5" y="504.9" width="3" height="1" fill="#9a9a9a"/><rect x="5" y="508.1" width="3" height="1" fill="#9a9a9a"/><rect x="5" y="511.3" width="3" height="1" fill="#9a9a9a"/><rect x="5" y="514.5" width="3" height="1" fill="#9a9a9a"/><rect x="5" y="517.8" width="3" height="1" fill="#9a9a9a"/><rect x="5" y="521.0" width="3" height="1" fill="#9a9a9a"/><rect x="5" y="524.2" width="3" height="1" fill="#9a9a9a"/><rect x="5" y="527.4" width="3" height="1" fill="#9a9a9a"/><rect x="5" y="530.6" width="3" height="1" fill="#9a9a9a"/><rect x="5" y="533.8" width="3" height="1" fill="#9a9a9a"/><rect x="5" y="537.1" width="3" height="1" fill="#9a9a9a"/><rect x="5" y="540.3" width="3" height="1" fill="#9a9a9a"/><rect x="0" y="543.5" width="8" height="1.5" fill="#5a5a5a"/><path d="M-1 550.5 h3 v5 h-3" stroke="#e0e0e0" stroke-width="1" fill="none"/><rect x="5" y="546.7" width="3" height="1" fill="#9a9a9a"/><rect x="5" y="549.9" width="3" height="1" fill="#9a9a9a"/><rect x="5" y="553.2" width="3" height="1" fill="#9a9a9a"/><rect x="5" y="556.4" width="3" height="1" fill="#9a9a9a"/><rect x="5" y="559.6" width="3" height="1" fill="#9a9a9a"/><rect x="5" y="562.8" width="3" height="1" fill="#9a9a9a"/><rect x="5" y="566.0" width="3" height="1" fill="#9a9a9a"/><rect x="5" y="569.2" width="3" height="1" fill="#9a9a9a"/><rect x="5" y="572.5" width="3" height="1" fill="#9a9a9a"/><rect x="5" y="575.7" width="3" height="1" fill="#9a9a9a"/><rect x="5" y="578.9" width="3" height="1" fill="#9a9a9a"/><rect x="5" y="582.1" width="3" height="1" fill="#9a9a9a"/><rect x="5" y="585.3" width="3" height="1" fill="#9a9a9a"/><rect x="5" y="588.6" width="3" height="1" fill="#9a9a9a"/><rect x="5" y="591.8" width="3" height="1" fill="#9a9a9a"/><rect x="0" y="595.0" width="8" height="1.5" fill="#5a5a5a"/><path d="M-1 602.0 h3 v5 h-3" stroke="#e0e0e0" stroke-width="1" fill="none"/><rect x="5" y="598.2" width="3" height="1" fill="#9a9a9a"/><rect x="5" y="601.4" width="3" height="1" fill="#9a9a9a"/><rect x="5" y="604.7" width="3" height="1" fill="#9a9a9a"/><rect x="5" y="607.9" width="3" height="1" fill="#9a9a9a"/><rect x="5" y="611.1" width="3" height="1" fill="#9a9a9a"/><rect x="5" y="614.3" width="3" height="1" fill="#9a9a9a"/><rect x="5" y="617.5" width="3" height="1" fill="#9a9a9a"/><rect x="5" y="620.8" width="3" height="1" fill="#9a9a9a"/><rect x="5" y="624.0" width="3" height="1" fill="#9a9a9a"/><rect x="5" y="627.2" width="3" height="1" fill="#9a9a9a"/><rect x="5" y="630.4" width="3" height="1" fill="#9a9a9a"/><rect x="5" y="633.6" width="3" height="1" fill="#9a9a9a"/><rect x="5" y="636.8" width="3" height="1" fill="#9a9a9a"/><rect x="5" y="640.1" width="3" height="1" fill="#9a9a9a"/><rect x="5" y="643.3" width="3" height="1" fill="#9a9a9a"/><rect x="0" y="646.5" width="8" height="1.5" fill="#5a5a5a"/><path d="M-1 653.5 h3 v5 h-3" stroke="#e0e0e0" stroke-width="1" fill="none"/><rect x="5" y="649.7" width="3" height="1" fill="#9a9a9a"/><rect x="5" y="652.9" width="3" height="1" fill="#9a9a9a"/><rect x="5" y="656.2" width="3" height="1" fill="#9a9a9a"/><rect x="5" y="659.4" width="3" height="1" fill="#9a9a9a"/><rect x="5" y="662.6" width="3" height="1" fill="#9a9a9a"/><rect x="5" y="665.8" width="3" height="1" fill="#9a9a9a"/><rect x="5" y="669.0" width="3" height="1" fill="#9a9a9a"/><rect x="5" y="672.2" width="3" height="1" fill="#9a9a9a"/><rect x="5" y="675.5" width="3" height="1" fill="#9a9a9a"/><rect x="5" y="678.7" width="3" height="1" fill="#9a9a9a"/><rect x="5" y="681.9" width="3" height="1" fill="#9a9a9a"/><rect x="5" y="685.1" width="3" height="1" fill="#9a9a9a"/><rect x="5" y="688.3" width="3" height="1" fill="#9a9a9a"/><rect x="5" y="691.6" width="3" height="1" fill="#9a9a9a"/><rect x="5" y="694.8" width="3" height="1" fill="#9a9a9a"/><rect x="0" y="698.0" width="8" height="1.5" fill="#5a5a5a"/><path d="M-1 705.0 h3 v5 h-3" stroke="#e0e0e0" stroke-width="1" fill="none"/><rect x="5" y="701.2" width="3" height="1" fill="#9a9a9a"/><rect x="5" y="704.4" width="3" height="1" fill="#9a9a9a"/><rect x="5" y="707.7" width="3" height="1" fill="#9a9a9a"/><rect x="5" y="710.9" width="3" height="1" fill="#9a9a9a"/><rect x="5" y="714.1" width="3" height="1" fill="#9a9a9a"/><rect x="5" y="717.3" width="3" height="1" fill="#9a9a9a"/><rect x="5" y="720.5" width="3" height="1" fill="#9a9a9a"/><rect x="5" y="723.8" width="3" height="1" fill="#9a9a9a"/><rect x="5" y="727.0" width="3" height="1" fill="#9a9a9a"/><rect x="5" y="730.2" width="3" height="1" fill="#9a9a9a"/><rect x="5" y="733.4" width="3" height="1" fill="#9a9a9a"/><rect x="5" y="736.6" width="3" height="1" fill="#9a9a9a"/><rect x="5" y="739.8" width="3" height="1" fill="#9a9a9a"/><rect x="5" y="743.1" width="3" height="1" fill="#9a9a9a"/><rect x="5" y="746.3" width="3" height="1" fill="#9a9a9a"/><rect x="0" y="749.5" width="8" height="1.5" fill="#5a5a5a"/><path d="M-1 756.5 h3 v5 h-3" stroke="#e0e0e0" stroke-width="1" fill="none"/><rect x="5" y="752.7" width="3" height="1" fill="#9a9a9a"/><rect x="5" y="755.9" width="3" height="1" fill="#9a9a9a"/><rect x="5" y="759.2" width="3" height="1" fill="#9a9a9a"/><rect x="5" y="762.4" width="3" height="1" fill="#9a9a9a"/><rect x="5" y="765.6" width="3" height="1" fill="#9a9a9a"/><rect x="5" y="768.8" width="3" height="1" fill="#9a9a9a"/></svg>
<svg class="a" style="left:0px;top:94px;" width="1217" height="12" viewBox="0 0 1217 12"><rect x="33" y="0" width="1" height="12" fill="#8a8a8a"/><rect x="36" y="9" width="1" height="3" fill="#a8a8a8"/><rect x="40" y="9" width="1" height="3" fill="#a8a8a8"/><rect x="43" y="9" width="1" height="3" fill="#a8a8a8"/><rect x="47" y="9" width="1" height="3" fill="#a8a8a8"/><rect x="51" y="9" width="1" height="3" fill="#a8a8a8"/><rect x="54" y="9" width="1" height="3" fill="#a8a8a8"/><rect x="58" y="9" width="1" height="3" fill="#a8a8a8"/><rect x="62" y="9" width="1" height="3" fill="#a8a8a8"/><rect x="65" y="9" width="1" height="3" fill="#a8a8a8"/><rect x="69" y="9" width="1" height="3" fill="#a8a8a8"/><rect x="72" y="9" width="1" height="3" fill="#a8a8a8"/><rect x="76" y="9" width="1" height="3" fill="#a8a8a8"/><rect x="80" y="9" width="1" height="3" fill="#a8a8a8"/><rect x="83" y="9" width="1" height="3" fill="#a8a8a8"/><rect x="87" y="9" width="1" height="3" fill="#a8a8a8"/><rect x="91" y="0" width="1" height="12" fill="#8a8a8a"/><rect x="94" y="9" width="1" height="3" fill="#a8a8a8"/><rect x="98" y="9" width="1" height="3" fill="#a8a8a8"/><rect x="101" y="9" width="1" height="3" fill="#a8a8a8"/><rect x="105" y="9" width="1" height="3" fill="#a8a8a8"/><rect x="109" y="9" width="1" height="3" fill="#a8a8a8"/><rect x="112" y="9" width="1" height="3" fill="#a8a8a8"/><rect x="116" y="9" width="1" height="3" fill="#a8a8a8"/><rect x="120" y="9" width="1" height="3" fill="#a8a8a8"/><rect x="123" y="9" width="1" height="3" fill="#a8a8a8"/><rect x="127" y="9" width="1" height="3" fill="#a8a8a8"/><rect x="130" y="9" width="1" height="3" fill="#a8a8a8"/><rect x="134" y="9" width="1" height="3" fill="#a8a8a8"/><rect x="138" y="9" width="1" height="3" fill="#a8a8a8"/><rect x="141" y="9" width="1" height="3" fill="#a8a8a8"/><rect x="145" y="9" width="1" height="3" fill="#a8a8a8"/><rect x="149" y="0" width="1" height="12" fill="#8a8a8a"/><rect x="152" y="9" width="1" height="3" fill="#a8a8a8"/><rect x="156" y="9" width="1" height="3" fill="#a8a8a8"/><rect x="159" y="9" width="1" height="3" fill="#a8a8a8"/><rect x="163" y="9" width="1" height="3" fill="#a8a8a8"/><rect x="167" y="9" width="1" height="3" fill="#a8a8a8"/><rect x="170" y="9" width="1" height="3" fill="#a8a8a8"/><rect x="174" y="9" width="1" height="3" fill="#a8a8a8"/><rect x="178" y="9" width="1" height="3" fill="#a8a8a8"/><rect x="181" y="9" width="1" height="3" fill="#a8a8a8"/><rect x="185" y="9" width="1" height="3" fill="#a8a8a8"/><rect x="188" y="9" width="1" height="3" fill="#a8a8a8"/><rect x="192" y="9" width="1" height="3" fill="#a8a8a8"/><rect x="196" y="9" width="1" height="3" fill="#a8a8a8"/><rect x="199" y="9" width="1" height="3" fill="#a8a8a8"/><rect x="203" y="9" width="1" height="3" fill="#a8a8a8"/><rect x="207" y="0" width="1" height="12" fill="#8a8a8a"/><rect x="210" y="9" width="1" height="3" fill="#a8a8a8"/><rect x="214" y="9" width="1" height="3" fill="#a8a8a8"/><rect x="217" y="9" width="1" height="3" fill="#a8a8a8"/><rect x="221" y="9" width="1" height="3" fill="#a8a8a8"/><rect x="225" y="9" width="1" height="3" fill="#a8a8a8"/><rect x="228" y="9" width="1" height="3" fill="#a8a8a8"/><rect x="232" y="9" width="1" height="3" fill="#a8a8a8"/><rect x="236" y="9" width="1" height="3" fill="#a8a8a8"/><rect x="239" y="9" width="1" height="3" fill="#a8a8a8"/><rect x="243" y="9" width="1" height="3" fill="#a8a8a8"/><rect x="246" y="9" width="1" height="3" fill="#a8a8a8"/><rect x="250" y="9" width="1" height="3" fill="#a8a8a8"/><rect x="254" y="9" width="1" height="3" fill="#a8a8a8"/><rect x="257" y="9" width="1" height="3" fill="#a8a8a8"/><rect x="261" y="9" width="1" height="3" fill="#a8a8a8"/><rect x="265" y="0" width="1" height="12" fill="#8a8a8a"/><rect x="268" y="9" width="1" height="3" fill="#a8a8a8"/><rect x="272" y="9" width="1" height="3" fill="#a8a8a8"/><rect x="275" y="9" width="1" height="3" fill="#a8a8a8"/><rect x="279" y="9" width="1" height="3" fill="#a8a8a8"/><rect x="283" y="9" width="1" height="3" fill="#a8a8a8"/><rect x="286" y="9" width="1" height="3" fill="#a8a8a8"/><rect x="290" y="9" width="1" height="3" fill="#a8a8a8"/><rect x="294" y="9" width="1" height="3" fill="#a8a8a8"/><rect x="297" y="9" width="1" height="3" fill="#a8a8a8"/><rect x="301" y="9" width="1" height="3" fill="#a8a8a8"/><rect x="304" y="9" width="1" height="3" fill="#a8a8a8"/><rect x="308" y="9" width="1" height="3" fill="#a8a8a8"/><rect x="312" y="9" width="1" height="3" fill="#a8a8a8"/><rect x="315" y="9" width="1" height="3" fill="#a8a8a8"/><rect x="319" y="9" width="1" height="3" fill="#a8a8a8"/><rect x="323" y="0" width="1" height="12" fill="#8a8a8a"/><rect x="326" y="9" width="1" height="3" fill="#a8a8a8"/><rect x="330" y="9" width="1" height="3" fill="#a8a8a8"/><rect x="333" y="9" width="1" height="3" fill="#a8a8a8"/><rect x="337" y="9" width="1" height="3" fill="#a8a8a8"/><rect x="341" y="9" width="1" height="3" fill="#a8a8a8"/><rect x="344" y="9" width="1" height="3" fill="#a8a8a8"/><rect x="348" y="9" width="1" height="3" fill="#a8a8a8"/><rect x="352" y="9" width="1" height="3" fill="#a8a8a8"/><rect x="355" y="9" width="1" height="3" fill="#a8a8a8"/><rect x="359" y="9" width="1" height="3" fill="#a8a8a8"/><rect x="362" y="9" width="1" height="3" fill="#a8a8a8"/><rect x="366" y="9" width="1" height="3" fill="#a8a8a8"/><rect x="370" y="9" width="1" height="3" fill="#a8a8a8"/><rect x="373" y="9" width="1" height="3" fill="#a8a8a8"/><rect x="377" y="9" width="1" height="3" fill="#a8a8a8"/><rect x="381" y="0" width="1" height="12" fill="#8a8a8a"/><rect x="384" y="9" width="1" height="3" fill="#a8a8a8"/><rect x="388" y="9" width="1" height="3" fill="#a8a8a8"/><rect x="391" y="9" width="1" height="3" fill="#a8a8a8"/><rect x="395" y="9" width="1" height="3" fill="#a8a8a8"/><rect x="399" y="9" width="1" height="3" fill="#a8a8a8"/><rect x="402" y="9" width="1" height="3" fill="#a8a8a8"/><rect x="406" y="9" width="1" height="3" fill="#a8a8a8"/><rect x="410" y="9" width="1" height="3" fill="#a8a8a8"/><rect x="413" y="9" width="1" height="3" fill="#a8a8a8"/><rect x="417" y="9" width="1" height="3" fill="#a8a8a8"/><rect x="420" y="9" width="1" height="3" fill="#a8a8a8"/><rect x="424" y="9" width="1" height="3" fill="#a8a8a8"/><rect x="428" y="9" width="1" height="3" fill="#a8a8a8"/><rect x="431" y="9" width="1" height="3" fill="#a8a8a8"/><rect x="435" y="9" width="1" height="3" fill="#a8a8a8"/><rect x="439" y="0" width="1" height="12" fill="#8a8a8a"/><rect x="442" y="9" width="1" height="3" fill="#a8a8a8"/><rect x="446" y="9" width="1" height="3" fill="#a8a8a8"/><rect x="449" y="9" width="1" height="3" fill="#a8a8a8"/><rect x="453" y="9" width="1" height="3" fill="#a8a8a8"/><rect x="457" y="9" width="1" height="3" fill="#a8a8a8"/><rect x="460" y="9" width="1" height="3" fill="#a8a8a8"/><rect x="464" y="9" width="1" height="3" fill="#a8a8a8"/><rect x="468" y="9" width="1" height="3" fill="#a8a8a8"/><rect x="471" y="9" width="1" height="3" fill="#a8a8a8"/><rect x="475" y="9" width="1" height="3" fill="#a8a8a8"/><rect x="478" y="9" width="1" height="3" fill="#a8a8a8"/><rect x="482" y="9" width="1" height="3" fill="#a8a8a8"/><rect x="486" y="9" width="1" height="3" fill="#a8a8a8"/><rect x="489" y="9" width="1" height="3" fill="#a8a8a8"/><rect x="493" y="9" width="1" height="3" fill="#a8a8a8"/><rect x="497" y="0" width="1" height="12" fill="#8a8a8a"/><rect x="500" y="9" width="1" height="3" fill="#a8a8a8"/><rect x="504" y="9" width="1" height="3" fill="#a8a8a8"/><rect x="507" y="9" width="1" height="3" fill="#a8a8a8"/><rect x="511" y="9" width="1" height="3" fill="#a8a8a8"/><rect x="515" y="9" width="1" height="3" fill="#a8a8a8"/><rect x="518" y="9" width="1" height="3" fill="#a8a8a8"/><rect x="522" y="9" width="1" height="3" fill="#a8a8a8"/><rect x="526" y="9" width="1" height="3" fill="#a8a8a8"/><rect x="529" y="9" width="1" height="3" fill="#a8a8a8"/><rect x="533" y="9" width="1" height="3" fill="#a8a8a8"/><rect x="536" y="9" width="1" height="3" fill="#a8a8a8"/><rect x="540" y="9" width="1" height="3" fill="#a8a8a8"/><rect x="544" y="9" width="1" height="3" fill="#a8a8a8"/><rect x="547" y="9" width="1" height="3" fill="#a8a8a8"/><rect x="551" y="9" width="1" height="3" fill="#a8a8a8"/><rect x="555" y="0" width="1" height="12" fill="#8a8a8a"/><rect x="558" y="9" width="1" height="3" fill="#a8a8a8"/><rect x="562" y="9" width="1" height="3" fill="#a8a8a8"/><rect x="565" y="9" width="1" height="3" fill="#a8a8a8"/><rect x="569" y="9" width="1" height="3" fill="#a8a8a8"/><rect x="573" y="9" width="1" height="3" fill="#a8a8a8"/><rect x="576" y="9" width="1" height="3" fill="#a8a8a8"/><rect x="580" y="9" width="1" height="3" fill="#a8a8a8"/><rect x="584" y="9" width="1" height="3" fill="#a8a8a8"/><rect x="587" y="9" width="1" height="3" fill="#a8a8a8"/><rect x="591" y="9" width="1" height="3" fill="#a8a8a8"/><rect x="594" y="9" width="1" height="3" fill="#a8a8a8"/><rect x="598" y="9" width="1" height="3" fill="#a8a8a8"/><rect x="602" y="9" width="1" height="3" fill="#a8a8a8"/><rect x="605" y="9" width="1" height="3" fill="#a8a8a8"/><rect x="609" y="9" width="1" height="3" fill="#a8a8a8"/><rect x="613" y="0" width="1" height="12" fill="#8a8a8a"/><rect x="616" y="9" width="1" height="3" fill="#a8a8a8"/><rect x="620" y="9" width="1" height="3" fill="#a8a8a8"/><rect x="623" y="9" width="1" height="3" fill="#a8a8a8"/><rect x="627" y="9" width="1" height="3" fill="#a8a8a8"/><rect x="631" y="9" width="1" height="3" fill="#a8a8a8"/><rect x="634" y="9" width="1" height="3" fill="#a8a8a8"/><rect x="638" y="9" width="1" height="3" fill="#a8a8a8"/><rect x="642" y="9" width="1" height="3" fill="#a8a8a8"/><rect x="645" y="9" width="1" height="3" fill="#a8a8a8"/><rect x="649" y="9" width="1" height="3" fill="#a8a8a8"/><rect x="652" y="9" width="1" height="3" fill="#a8a8a8"/><rect x="656" y="9" width="1" height="3" fill="#a8a8a8"/><rect x="660" y="9" width="1" height="3" fill="#a8a8a8"/><rect x="663" y="9" width="1" height="3" fill="#a8a8a8"/><rect x="667" y="9" width="1" height="3" fill="#a8a8a8"/><rect x="671" y="0" width="1" height="12" fill="#8a8a8a"/><rect x="674" y="9" width="1" height="3" fill="#a8a8a8"/><rect x="678" y="9" width="1" height="3" fill="#a8a8a8"/><rect x="681" y="9" width="1" height="3" fill="#a8a8a8"/><rect x="685" y="9" width="1" height="3" fill="#a8a8a8"/><rect x="689" y="9" width="1" height="3" fill="#a8a8a8"/><rect x="692" y="9" width="1" height="3" fill="#a8a8a8"/><rect x="696" y="9" width="1" height="3" fill="#a8a8a8"/><rect x="700" y="9" width="1" height="3" fill="#a8a8a8"/><rect x="703" y="9" width="1" height="3" fill="#a8a8a8"/><rect x="707" y="9" width="1" height="3" fill="#a8a8a8"/><rect x="710" y="9" width="1" height="3" fill="#a8a8a8"/><rect x="714" y="9" width="1" height="3" fill="#a8a8a8"/><rect x="718" y="9" width="1" height="3" fill="#a8a8a8"/><rect x="721" y="9" width="1" height="3" fill="#a8a8a8"/><rect x="725" y="9" width="1" height="3" fill="#a8a8a8"/><rect x="729" y="0" width="1" height="12" fill="#8a8a8a"/><rect x="732" y="9" width="1" height="3" fill="#a8a8a8"/><rect x="736" y="9" width="1" height="3" fill="#a8a8a8"/><rect x="739" y="9" width="1" height="3" fill="#a8a8a8"/><rect x="743" y="9" width="1" height="3" fill="#a8a8a8"/><rect x="747" y="9" width="1" height="3" fill="#a8a8a8"/><rect x="750" y="9" width="1" height="3" fill="#a8a8a8"/><rect x="754" y="9" width="1" height="3" fill="#a8a8a8"/><rect x="758" y="9" width="1" height="3" fill="#a8a8a8"/><rect x="761" y="9" width="1" height="3" fill="#a8a8a8"/><rect x="765" y="9" width="1" height="3" fill="#a8a8a8"/><rect x="768" y="9" width="1" height="3" fill="#a8a8a8"/><rect x="772" y="9" width="1" height="3" fill="#a8a8a8"/><rect x="776" y="9" width="1" height="3" fill="#a8a8a8"/><rect x="779" y="9" width="1" height="3" fill="#a8a8a8"/><rect x="783" y="9" width="1" height="3" fill="#a8a8a8"/><rect x="787" y="0" width="1" height="12" fill="#8a8a8a"/><rect x="790" y="9" width="1" height="3" fill="#a8a8a8"/><rect x="794" y="9" width="1" height="3" fill="#a8a8a8"/><rect x="797" y="9" width="1" height="3" fill="#a8a8a8"/><rect x="801" y="9" width="1" height="3" fill="#a8a8a8"/><rect x="805" y="9" width="1" height="3" fill="#a8a8a8"/><rect x="808" y="9" width="1" height="3" fill="#a8a8a8"/><rect x="812" y="9" width="1" height="3" fill="#a8a8a8"/><rect x="816" y="9" width="1" height="3" fill="#a8a8a8"/><rect x="819" y="9" width="1" height="3" fill="#a8a8a8"/><rect x="823" y="9" width="1" height="3" fill="#a8a8a8"/><rect x="826" y="9" width="1" height="3" fill="#a8a8a8"/><rect x="830" y="9" width="1" height="3" fill="#a8a8a8"/><rect x="834" y="9" width="1" height="3" fill="#a8a8a8"/><rect x="837" y="9" width="1" height="3" fill="#a8a8a8"/><rect x="841" y="9" width="1" height="3" fill="#a8a8a8"/><rect x="845" y="0" width="1" height="12" fill="#8a8a8a"/><rect x="848" y="9" width="1" height="3" fill="#a8a8a8"/><rect x="852" y="9" width="1" height="3" fill="#a8a8a8"/><rect x="855" y="9" width="1" height="3" fill="#a8a8a8"/><rect x="859" y="9" width="1" height="3" fill="#a8a8a8"/><rect x="863" y="9" width="1" height="3" fill="#a8a8a8"/><rect x="866" y="9" width="1" height="3" fill="#a8a8a8"/><rect x="870" y="9" width="1" height="3" fill="#a8a8a8"/><rect x="874" y="9" width="1" height="3" fill="#a8a8a8"/><rect x="877" y="9" width="1" height="3" fill="#a8a8a8"/><rect x="881" y="9" width="1" height="3" fill="#a8a8a8"/><rect x="884" y="9" width="1" height="3" fill="#a8a8a8"/><rect x="888" y="9" width="1" height="3" fill="#a8a8a8"/><rect x="892" y="9" width="1" height="3" fill="#a8a8a8"/><rect x="895" y="9" width="1" height="3" fill="#a8a8a8"/><rect x="899" y="9" width="1" height="3" fill="#a8a8a8"/><rect x="903" y="0" width="1" height="12" fill="#8a8a8a"/><rect x="906" y="9" width="1" height="3" fill="#a8a8a8"/><rect x="910" y="9" width="1" height="3" fill="#a8a8a8"/><rect x="913" y="9" width="1" height="3" fill="#a8a8a8"/><rect x="917" y="9" width="1" height="3" fill="#a8a8a8"/><rect x="921" y="9" width="1" height="3" fill="#a8a8a8"/><rect x="924" y="9" width="1" height="3" fill="#a8a8a8"/><rect x="928" y="9" width="1" height="3" fill="#a8a8a8"/><rect x="932" y="9" width="1" height="3" fill="#a8a8a8"/><rect x="935" y="9" width="1" height="3" fill="#a8a8a8"/><rect x="939" y="9" width="1" height="3" fill="#a8a8a8"/><rect x="942" y="9" width="1" height="3" fill="#a8a8a8"/><rect x="946" y="9" width="1" height="3" fill="#a8a8a8"/><rect x="950" y="9" width="1" height="3" fill="#a8a8a8"/><rect x="953" y="9" width="1" height="3" fill="#a8a8a8"/><rect x="957" y="9" width="1" height="3" fill="#a8a8a8"/><rect x="961" y="0" width="1" height="12" fill="#8a8a8a"/><rect x="964" y="9" width="1" height="3" fill="#a8a8a8"/><rect x="968" y="9" width="1" height="3" fill="#a8a8a8"/><rect x="971" y="9" width="1" height="3" fill="#a8a8a8"/><rect x="975" y="9" width="1" height="3" fill="#a8a8a8"/><rect x="979" y="9" width="1" height="3" fill="#a8a8a8"/><rect x="982" y="9" width="1" height="3" fill="#a8a8a8"/><rect x="986" y="9" width="1" height="3" fill="#a8a8a8"/><rect x="990" y="9" width="1" height="3" fill="#a8a8a8"/><rect x="993" y="9" width="1" height="3" fill="#a8a8a8"/><rect x="997" y="9" width="1" height="3" fill="#a8a8a8"/><rect x="1000" y="9" width="1" height="3" fill="#a8a8a8"/><rect x="1004" y="9" width="1" height="3" fill="#a8a8a8"/><rect x="1008" y="9" width="1" height="3" fill="#a8a8a8"/><rect x="1011" y="9" width="1" height="3" fill="#a8a8a8"/><rect x="1015" y="9" width="1" height="3" fill="#a8a8a8"/><rect x="1019" y="0" width="1" height="12" fill="#8a8a8a"/><rect x="1022" y="9" width="1" height="3" fill="#a8a8a8"/><rect x="1026" y="9" width="1" height="3" fill="#a8a8a8"/><rect x="1029" y="9" width="1" height="3" fill="#a8a8a8"/><rect x="1033" y="9" width="1" height="3" fill="#a8a8a8"/><rect x="1037" y="9" width="1" height="3" fill="#a8a8a8"/><rect x="1040" y="9" width="1" height="3" fill="#a8a8a8"/><rect x="1044" y="9" width="1" height="3" fill="#a8a8a8"/><rect x="1048" y="9" width="1" height="3" fill="#a8a8a8"/><rect x="1051" y="9" width="1" height="3" fill="#a8a8a8"/><rect x="1055" y="9" width="1" height="3" fill="#a8a8a8"/><rect x="1058" y="9" width="1" height="3" fill="#a8a8a8"/><rect x="1062" y="9" width="1" height="3" fill="#a8a8a8"/><rect x="1066" y="9" width="1" height="3" fill="#a8a8a8"/><rect x="1069" y="9" width="1" height="3" fill="#a8a8a8"/><rect x="1073" y="9" width="1" height="3" fill="#a8a8a8"/><rect x="1077" y="0" width="1" height="12" fill="#8a8a8a"/><rect x="1080" y="9" width="1" height="3" fill="#a8a8a8"/><rect x="1084" y="9" width="1" height="3" fill="#a8a8a8"/><rect x="1087" y="9" width="1" height="3" fill="#a8a8a8"/><rect x="1091" y="9" width="1" height="3" fill="#a8a8a8"/><rect x="1095" y="9" width="1" height="3" fill="#a8a8a8"/><rect x="1098" y="9" width="1" height="3" fill="#a8a8a8"/><rect x="1102" y="9" width="1" height="3" fill="#a8a8a8"/><rect x="1106" y="9" width="1" height="3" fill="#a8a8a8"/><rect x="1109" y="9" width="1" height="3" fill="#a8a8a8"/><rect x="1113" y="9" width="1" height="3" fill="#a8a8a8"/><rect x="1116" y="9" width="1" height="3" fill="#a8a8a8"/><rect x="1120" y="9" width="1" height="3" fill="#a8a8a8"/><rect x="1124" y="9" width="1" height="3" fill="#a8a8a8"/><rect x="1127" y="9" width="1" height="3" fill="#a8a8a8"/><rect x="1131" y="9" width="1" height="3" fill="#a8a8a8"/><rect x="1135" y="0" width="1" height="12" fill="#8a8a8a"/><rect x="1138" y="9" width="1" height="3" fill="#a8a8a8"/><rect x="1142" y="9" width="1" height="3" fill="#a8a8a8"/><rect x="1145" y="9" width="1" height="3" fill="#a8a8a8"/><rect x="1149" y="9" width="1" height="3" fill="#a8a8a8"/><rect x="1153" y="9" width="1" height="3" fill="#a8a8a8"/><rect x="1156" y="9" width="1" height="3" fill="#a8a8a8"/><rect x="1160" y="9" width="1" height="3" fill="#a8a8a8"/><rect x="1164" y="9" width="1" height="3" fill="#a8a8a8"/><rect x="1167" y="9" width="1" height="3" fill="#a8a8a8"/><rect x="1171" y="9" width="1" height="3" fill="#a8a8a8"/><rect x="1174" y="9" width="1" height="3" fill="#a8a8a8"/><rect x="1178" y="9" width="1" height="3" fill="#a8a8a8"/><rect x="1182" y="9" width="1" height="3" fill="#a8a8a8"/><rect x="1185" y="9" width="1" height="3" fill="#a8a8a8"/><rect x="1189" y="9" width="1" height="3" fill="#a8a8a8"/><rect x="1193" y="0" width="1" height="12" fill="#8a8a8a"/><rect x="1196" y="9" width="1" height="3" fill="#a8a8a8"/><rect x="1200" y="9" width="1" height="3" fill="#a8a8a8"/><rect x="1203" y="9" width="1" height="3" fill="#a8a8a8"/><rect x="1207" y="9" width="1" height="3" fill="#a8a8a8"/><rect x="1211" y="9" width="1" height="3" fill="#a8a8a8"/><rect x="1214" y="9" width="1" height="3" fill="#a8a8a8"/><rect x="29" y="9" width="1" height="3" fill="#a8a8a8"/><rect x="25" y="9" width="1" height="3" fill="#a8a8a8"/><rect x="22" y="9" width="1" height="3" fill="#a8a8a8"/><rect x="18" y="9" width="1" height="3" fill="#a8a8a8"/><rect x="14" y="9" width="1" height="3" fill="#a8a8a8"/><rect x="11" y="9" width="1" height="3" fill="#a8a8a8"/></svg>
<div class="t" style="left:34.5px;top:94.71px;font-size:7.2px;color:#f4f4f4;transform:scaleX(0.937);transform-origin:0 0;">160</div>
<div class="t" style="left:92.5px;top:94.71px;font-size:7.2px;color:#f4f4f4;transform:scaleX(0.937);transform-origin:0 0;">144</div>
<div class="t" style="left:150.5px;top:94.71px;font-size:7.2px;color:#f4f4f4;transform:scaleX(0.937);transform-origin:0 0;">128</div>
<div class="t" style="left:208.5px;top:94.71px;font-size:7.2px;color:#f4f4f4;transform:scaleX(0.980);transform-origin:0 0;">112</div>
<div class="t" style="left:266.5px;top:94.71px;font-size:7.2px;color:#f4f4f4;transform:scaleX(0.937);transform-origin:0 0;">96</div>
<div class="t" style="left:324.5px;top:94.71px;font-size:7.2px;color:#f4f4f4;transform:scaleX(0.937);transform-origin:0 0;">80</div>
<div class="t" style="left:382.5px;top:94.71px;font-size:7.2px;color:#f4f4f4;transform:scaleX(0.937);transform-origin:0 0;">64</div>
<div class="t" style="left:440.5px;top:94.71px;font-size:7.2px;color:#f4f4f4;transform:scaleX(0.937);transform-origin:0 0;">48</div>
<div class="t" style="left:498.5px;top:94.71px;font-size:7.2px;color:#f4f4f4;transform:scaleX(0.937);transform-origin:0 0;">32</div>
<div class="t" style="left:556.5px;top:94.71px;font-size:7.2px;color:#f4f4f4;transform:scaleX(0.937);transform-origin:0 0;">16</div>
<div class="t" style="left:614.5px;top:94.71px;font-size:7.2px;color:#f4f4f4;transform:scaleX(0.937);transform-origin:0 0;">0</div>
<div class="t" style="left:672.5px;top:94.71px;font-size:7.2px;color:#f4f4f4;transform:scaleX(0.937);transform-origin:0 0;">16</div>
<div class="t" style="left:730.5px;top:94.71px;font-size:7.2px;color:#f4f4f4;transform:scaleX(0.937);transform-origin:0 0;">32</div>
<div class="t" style="left:788.5px;top:94.71px;font-size:7.2px;color:#f4f4f4;transform:scaleX(0.937);transform-origin:0 0;">48</div>
<div class="t" style="left:846.5px;top:94.71px;font-size:7.2px;color:#f4f4f4;transform:scaleX(0.937);transform-origin:0 0;">64</div>
<div class="t" style="left:904.5px;top:94.71px;font-size:7.2px;color:#f4f4f4;transform:scaleX(0.937);transform-origin:0 0;">80</div>
<div class="t" style="left:962.5px;top:94.71px;font-size:7.2px;color:#f4f4f4;transform:scaleX(0.937);transform-origin:0 0;">96</div>
<div class="t" style="left:1020.5px;top:94.71px;font-size:7.2px;color:#f4f4f4;transform:scaleX(0.980);transform-origin:0 0;">112</div>
<div class="t" style="left:1078.5px;top:94.71px;font-size:7.2px;color:#f4f4f4;transform:scaleX(0.937);transform-origin:0 0;">128</div>
<div class="t" style="left:1136.5px;top:94.71px;font-size:7.2px;color:#f4f4f4;transform:scaleX(0.937);transform-origin:0 0;">144</div>
<div class="t" style="left:1194.5px;top:94.71px;font-size:7.2px;color:#f4f4f4;transform:scaleX(0.937);transform-origin:0 0;">160</div>
<div class="a" style="left:8px;top:106px;width:1209px;height:666px;background:#bababa;"></div>
<div class="a" style="left:612px;top:136px;width:61px;height:44px;background:#5b524a;"></div>
<div class="a" style="left:613px;top:137px;width:59px;height:42px;background:#d5c4ae;"></div>
<div class="a" style="left:659px;top:137px;width:1px;height:32px;background:#b2a290;"></div>
<div class="a" style="left:662px;top:146px;width:2px;height:2px;background:#8b7d70;"></div>
<div class="a" style="left:661px;top:154px;width:4px;height:2px;background:#5d5249;"></div>
<div class="a" style="left:662px;top:162px;width:2px;height:5px;background:#5d5249;"></div>
<div class="a" style="left:618px;top:171px;width:6px;height:2px;background:#8a7c6f;"></div>
<div class="a" style="left:552px;top:188px;width:121px;height:43px;background:#5a5a5a;"></div>
<div class="a" style="left:553px;top:189px;width:119px;height:41px;background:#f3f3f3;"></div>
<div class="a" style="left:553px;top:189px;width:23px;height:41px;background:#a9a99f;"></div>
<div class="a" style="left:612px;top:188px;width:1px;height:43px;background:#5a5a5a;"></div>
<div class="a" style="left:613px;top:189px;width:23px;height:41px;background:#a9a99f;"></div>
<div class="a" style="left:558px;top:208px;width:11px;height:3px;background:#8a8a82;"></div>
<div class="a" style="left:616px;top:208px;width:15px;height:3px;background:#8a8a82;"></div>
<div class="a" style="left:580px;top:196px;width:4px;height:1.2px;background:#6e6e6e;"></div>
<div class="a" style="left:580px;top:198px;width:4px;height:1.2px;background:#6e6e6e;"></div>
<div class="a" style="left:580px;top:200px;width:8px;height:1.2px;background:#6e6e6e;"></div>
<div class="a" style="left:580px;top:203px;width:3px;height:1.2px;background:#6e6e6e;"></div>
<div class="a" style="left:580px;top:205px;width:8px;height:1.2px;background:#6e6e6e;"></div>
<div class="a" style="left:580px;top:207px;width:4px;height:1.2px;background:#6e6e6e;"></div>
<div class="a" style="left:580px;top:214px;width:4px;height:1.2px;background:#6e6e6e;"></div>
<div class="a" style="left:580px;top:216px;width:10px;height:1.2px;background:#6e6e6e;"></div>
<div class="a" style="left:580px;top:218px;width:8px;height:1.2px;background:#6e6e6e;"></div>
<div class="a" style="left:580px;top:220px;width:9px;height:1.2px;background:#6e6e6e;"></div>
<div class="a" style="left:595px;top:196px;width:12px;height:1.2px;background:#6e6e6e;"></div>
<div class="a" style="left:595px;top:198px;width:4px;height:1.2px;background:#767676;"></div>
<div class="a" style="left:595px;top:200px;width:4px;height:1.2px;background:#767676;"></div>
<div class="a" style="left:595px;top:202px;width:4px;height:1.2px;background:#767676;"></div>
<div class="a" style="left:595px;top:204px;width:4px;height:1.2px;background:#767676;"></div>
<div class="a" style="left:595px;top:206px;width:4px;height:1.2px;background:#767676;"></div>
<div class="a" style="left:595px;top:208px;width:4px;height:1.2px;background:#767676;"></div>
<div class="a" style="left:595px;top:210px;width:4px;height:1.2px;background:#767676;"></div>
<div class="a" style="left:595px;top:212px;width:4px;height:1.2px;background:#767676;"></div>
<div class="a" style="left:595px;top:214px;width:4px;height:1.2px;background:#6e6e6e;"></div>
<div class="a" style="left:595px;top:216px;width:3px;height:1.2px;background:#6e6e6e;"></div>
<div class="a" style="left:595px;top:218px;width:7px;height:1.2px;background:#6e6e6e;"></div>
<div class="a" style="left:595px;top:220px;width:6px;height:1.2px;background:#6e6e6e;"></div>
<div class="a" style="left:641px;top:199px;width:6px;height:6px;border-radius:50%;background:#8c807d"></div>
<div class="a" style="left:643.5px;top:204px;width:1px;height:3px;background:#8c807d;"></div>
<div class="a" style="left:641.5px;top:207px;width:5px;height:1px;background:#8c807d;"></div>
<div class="a" style="left:641px;top:210px;width:6px;height:6px;border-radius:50%;background:#8c807d"></div>
<div class="a" style="left:643.5px;top:215px;width:1px;height:3px;background:#8c807d;"></div>
<div class="a" style="left:641.5px;top:218px;width:5px;height:1px;background:#8c807d;"></div>
<div class="a" style="left:651px;top:199px;width:6px;height:6px;border-radius:50%;background:#8c807d"></div>
<div class="a" style="left:653.5px;top:204px;width:1px;height:3px;background:#8c807d;"></div>
<div class="a" style="left:651.5px;top:207px;width:5px;height:1px;background:#8c807d;"></div>
<div class="a" style="left:651px;top:210px;width:6px;height:6px;border-radius:50%;background:#8c807d"></div>
<div class="a" style="left:653.5px;top:215px;width:1px;height:3px;background:#8c807d;"></div>
<div class="a" style="left:651.5px;top:218px;width:5px;height:1px;background:#8c807d;"></div>
<div class="a" style="left:660px;top:199px;width:6px;height:6px;border-radius:50%;background:#8c807d"></div>
<div class="a" style="left:662.5px;top:204px;width:1px;height:3px;background:#8c807d;"></div>
<div class="a" style="left:660.5px;top:207px;width:5px;height:1px;background:#8c807d;"></div>
<div class="a" style="left:660px;top:210px;width:6px;height:6px;border-radius:50%;background:#8c807d"></div>
<div class="a" style="left:662.5px;top:215px;width:1px;height:3px;background:#8c807d;"></div>
<div class="a" style="left:660.5px;top:218px;width:5px;height:1px;background:#8c807d;"></div>
<div class="a" style="left:605px;top:190px;width:4px;height:1px;background:#777;"></div>
<div class="a" style="left:665px;top:190px;width:4px;height:1px;background:#777;"></div>
<div class="a" style="left:552px;top:239px;width:121px;height:43px;background:#5a5a5a;"></div>
<div class="a" style="left:553px;top:240px;width:119px;height:41px;background:#ffffff;"></div>
<div class="a" style="left:553px;top:240px;width:39px;height:32px;background:#d5c4ae;"></div>
<div class="a" style="left:553px;top:271px;width:39px;height:1px;background:#6e625f;"></div>
<div class="a" style="left:553px;top:272px;width:39px;height:9px;background:#9c9090;"></div>
<div class="a" style="left:560px;top:247px;width:5px;height:5px;border-radius:50%;background:#a39180"></div>
<div class="a" style="left:592px;top:240px;width:20px;height:41px;background:#f4f4f4;"></div>
<div class="a" style="left:602px;top:241px;width:6px;height:1px;background:#aaa;"></div>
<div class="a" style="left:595px;top:248px;width:3px;height:3px;background:#555;"></div>
<div class="a" style="left:595px;top:252px;width:13px;height:2px;background:#5a5a5a;"></div>
<div class="a" style="left:595px;top:255px;width:11px;height:1px;background:#999;"></div>
<div class="a" style="left:595px;top:264px;width:4px;height:1px;background:#777;"></div>
<div class="a" style="left:595px;top:265px;width:15px;height:13px;background:#828282;"></div>
<div class="a" style="left:612px;top:239px;width:1.5px;height:43px;background:#5a5a5a;"></div>
<div class="a" style="left:614px;top:240px;width:58px;height:41px;background:#ffffff;"></div>
<div class="a" style="left:616px;top:244px;width:22px;height:19px;background:#ededed;"></div>
<div class="a" style="left:640px;top:244px;width:29px;height:19px;background:#ededed;"></div>
<div class="a" style="left:616px;top:264px;width:3px;height:1px;background:#888;"></div>
<div class="a" style="left:638px;top:264px;width:5px;height:1px;background:#888;"></div>
<div class="a" style="left:616px;top:266px;width:53px;height:9px;background:#efefef;"></div>
<div class="a" style="left:619px;top:269px;width:3px;height:3px;border-radius:50%;background:#bbb"></div>
<div class="a" style="left:616px;top:275px;width:53px;height:2px;background:#6b6262;"></div>
<div class="a" style="left:616px;top:277px;width:3px;height:1px;background:#888;"></div>
<div class="a" style="left:665px;top:241px;width:5px;height:1px;background:#aaa;"></div>
<div class="a" style="left:552px;top:291px;width:121px;height:43px;background:#5a5a5a;"></div>
<div class="a" style="left:553px;top:292px;width:119px;height:41px;background:#ffffff;"></div>
<div class="a" style="left:557px;top:296px;width:24px;height:18px;background:#ebebeb;"></div>
<div class="a" style="left:584px;top:296px;width:24px;height:18px;background:#ebebeb;"></div>
<div class="a" style="left:557px;top:315px;width:3px;height:1px;background:#888;"></div>
<div class="a" style="left:584px;top:315px;width:3px;height:1px;background:#888;"></div>
<div class="a" style="left:557px;top:317px;width:51px;height:10px;background:#eeeeee;"></div>
<div class="a" style="left:560px;top:320px;width:3px;height:3px;border-radius:50%;background:#bbb"></div>
<div class="a" style="left:557px;top:327px;width:51px;height:2px;background:#5e5757;"></div>
<div class="a" style="left:557px;top:329px;width:3px;height:1px;background:#888;"></div>
<div class="a" style="left:605px;top:293px;width:5px;height:1px;background:#aaa;"></div>
<div class="a" style="left:612px;top:291px;width:1.5px;height:43px;background:#5a5a5a;"></div>
<div class="a" style="left:614px;top:292px;width:58px;height:41px;background:#ffffff;"></div>
<div class="a" style="left:615px;top:293px;width:56px;height:39px;background:#ececec;"></div>
<div class="a" style="left:617px;top:296px;width:24px;height:15px;background:#ffffff;"></div>
<div class="a" style="left:617px;top:313px;width:24px;height:15px;background:#ffffff;"></div>
<div class="a" style="left:644px;top:296px;width:25px;height:32px;background:#ffffff;"></div>
<div class="a" style="left:617px;top:311px;width:5px;height:1.5px;background:#777;"></div>
<div class="a" style="left:617px;top:329px;width:5px;height:1px;background:#888;"></div>
<div class="a" style="left:644px;top:329px;width:5px;height:1px;background:#888;"></div>
<div class="a" style="left:664px;top:293px;width:6px;height:1px;background:#888;"></div>
<div class="a" style="left:552px;top:342px;width:121px;height:43px;background:#5a5a5a;"></div>
<div class="a" style="left:553px;top:343px;width:119px;height:41px;background:#ffffff;"></div>
<div class="a" style="left:553px;top:343px;width:39px;height:32px;background:#d5c4ae;"></div>
<div class="a" style="left:553px;top:374px;width:39px;height:1px;background:#6e625f;"></div>
<div class="a" style="left:553px;top:375px;width:39px;height:9px;background:#9c9090;"></div>
<div class="a" style="left:560px;top:350px;width:5px;height:5px;border-radius:50%;background:#a39180"></div>
<div class="a" style="left:592px;top:343px;width:20px;height:41px;background:#f4f4f4;"></div>
<div class="a" style="left:602px;top:344px;width:6px;height:1px;background:#aaa;"></div>
<div class="a" style="left:595px;top:351px;width:3px;height:3px;background:#555;"></div>
<div class="a" style="left:595px;top:355px;width:13px;height:2px;background:#5a5a5a;"></div>
<div class="a" style="left:595px;top:358px;width:11px;height:1px;background:#999;"></div>
<div class="a" style="left:595px;top:367px;width:4px;height:1px;background:#777;"></div>
<div class="a" style="left:595px;top:368px;width:15px;height:13px;background:#828282;"></div>
<div class="a" style="left:612px;top:342px;width:1.5px;height:43px;background:#5a5a5a;"></div>
<div class="a" style="left:614px;top:343px;width:58px;height:41px;background:#ffffff;"></div>
<div class="a" style="left:616px;top:347px;width:22px;height:19px;background:#ededed;"></div>
<div class="a" style="left:640px;top:347px;width:29px;height:19px;background:#ededed;"></div>
<div class="a" style="left:616px;top:367px;width:3px;height:1px;background:#888;"></div>
<div class="a" style="left:638px;top:367px;width:5px;height:1px;background:#888;"></div>
<div class="a" style="left:616px;top:369px;width:53px;height:9px;background:#efefef;"></div>
<div class="a" style="left:619px;top:372px;width:3px;height:3px;border-radius:50%;background:#bbb"></div>
<div class="a" style="left:616px;top:378px;width:53px;height:2px;background:#6b6262;"></div>
<div class="a" style="left:616px;top:380px;width:3px;height:1px;background:#888;"></div>
<div class="a" style="left:665px;top:344px;width:5px;height:1px;background:#aaa;"></div>
<div class="a" style="left:552px;top:394px;width:121px;height:43px;background:#5a5a5a;"></div>
<div class="a" style="left:553px;top:395px;width:119px;height:41px;background:#ffffff;"></div>
<div class="a" style="left:557px;top:399px;width:24px;height:18px;background:#ebebeb;"></div>
<div class="a" style="left:584px;top:399px;width:24px;height:18px;background:#ebebeb;"></div>
<div class="a" style="left:557px;top:418px;width:3px;height:1px;background:#888;"></div>
<div class="a" style="left:584px;top:418px;width:3px;height:1px;background:#888;"></div>
<div class="a" style="left:557px;top:420px;width:51px;height:10px;background:#eeeeee;"></div>
<div class="a" style="left:560px;top:423px;width:3px;height:3px;border-radius:50%;background:#bbb"></div>
<div class="a" style="left:557px;top:430px;width:51px;height:2px;background:#5e5757;"></div>
<div class="a" style="left:557px;top:432px;width:3px;height:1px;background:#888;"></div>
<div class="a" style="left:605px;top:396px;width:5px;height:1px;background:#aaa;"></div>
<div class="a" style="left:612px;top:394px;width:1.5px;height:43px;background:#5a5a5a;"></div>
<div class="a" style="left:614px;top:395px;width:58px;height:41px;background:#ffffff;"></div>
<div class="a" style="left:615px;top:396px;width:56px;height:39px;background:#ececec;"></div>
<div class="a" style="left:617px;top:399px;width:24px;height:15px;background:#ffffff;"></div>
<div class="a" style="left:617px;top:416px;width:24px;height:15px;background:#ffffff;"></div>
<div class="a" style="left:644px;top:399px;width:25px;height:32px;background:#ffffff;"></div>
<div class="a" style="left:617px;top:414px;width:5px;height:1.5px;background:#777;"></div>
<div class="a" style="left:617px;top:432px;width:5px;height:1px;background:#888;"></div>
<div class="a" style="left:644px;top:432px;width:5px;height:1px;background:#888;"></div>
<div class="a" style="left:664px;top:396px;width:6px;height:1px;background:#888;"></div>
<div class="a" style="left:552px;top:445px;width:121px;height:43px;background:#5a5a5a;"></div>
<div class="a" style="left:553px;top:446px;width:119px;height:41px;background:#ffffff;"></div>
<div class="a" style="left:553px;top:446px;width:39px;height:32px;background:#d5c4ae;"></div>
<div class="a" style="left:553px;top:477px;width:39px;height:1px;background:#6e625f;"></div>
<div class="a" style="left:553px;top:478px;width:39px;height:9px;background:#9c9090;"></div>
<div class="a" style="left:560px;top:453px;width:5px;height:5px;border-radius:50%;background:#a39180"></div>
<div class="a" style="left:592px;top:446px;width:20px;height:41px;background:#f4f4f4;"></div>
<div class="a" style="left:602px;top:447px;width:6px;height:1px;background:#aaa;"></div>
<div class="a" style="left:595px;top:454px;width:3px;height:3px;background:#555;"></div>
<div class="a" style="left:595px;top:458px;width:13px;height:2px;background:#5a5a5a;"></div>
<div class="a" style="left:595px;top:461px;width:11px;height:1px;background:#999;"></div>
<div class="a" style="left:595px;top:470px;width:4px;height:1px;background:#777;"></div>
<div class="a" style="left:595px;top:471px;width:15px;height:13px;background:#828282;"></div>
<div class="a" style="left:612px;top:445px;width:1.5px;height:43px;background:#5a5a5a;"></div>
<div class="a" style="left:614px;top:446px;width:58px;height:41px;background:#ffffff;"></div>
<div class="a" style="left:616px;top:450px;width:22px;height:19px;background:#ededed;"></div>
<div class="a" style="left:640px;top:450px;width:29px;height:19px;background:#ededed;"></div>
<div class="a" style="left:616px;top:470px;width:3px;height:1px;background:#888;"></div>
<div class="a" style="left:638px;top:470px;width:5px;height:1px;background:#888;"></div>
<div class="a" style="left:616px;top:472px;width:53px;height:9px;background:#efefef;"></div>
<div class="a" style="left:619px;top:475px;width:3px;height:3px;border-radius:50%;background:#bbb"></div>
<div class="a" style="left:616px;top:481px;width:53px;height:2px;background:#6b6262;"></div>
<div class="a" style="left:616px;top:483px;width:3px;height:1px;background:#888;"></div>
<div class="a" style="left:665px;top:447px;width:5px;height:1px;background:#aaa;"></div>
<div class="a" style="left:552px;top:496px;width:121px;height:43px;background:#5a5a5a;"></div>
<div class="a" style="left:553px;top:497px;width:119px;height:41px;background:#ffffff;"></div>
<div class="a" style="left:557px;top:501px;width:24px;height:18px;background:#ebebeb;"></div>
<div class="a" style="left:584px;top:501px;width:24px;height:18px;background:#ebebeb;"></div>
<div class="a" style="left:557px;top:520px;width:3px;height:1px;background:#888;"></div>
<div class="a" style="left:584px;top:520px;width:3px;height:1px;background:#888;"></div>
<div class="a" style="left:557px;top:522px;width:51px;height:10px;background:#eeeeee;"></div>
<div class="a" style="left:560px;top:525px;width:3px;height:3px;border-radius:50%;background:#bbb"></div>
<div class="a" style="left:557px;top:532px;width:51px;height:2px;background:#5e5757;"></div>
<div class="a" style="left:557px;top:534px;width:3px;height:1px;background:#888;"></div>
<div class="a" style="left:605px;top:498px;width:5px;height:1px;background:#aaa;"></div>
<div class="a" style="left:612px;top:496px;width:1.5px;height:43px;background:#5a5a5a;"></div>
<div class="a" style="left:614px;top:497px;width:58px;height:41px;background:#ffffff;"></div>
<div class="a" style="left:615px;top:498px;width:56px;height:39px;background:#ececec;"></div>
<div class="a" style="left:617px;top:501px;width:24px;height:15px;background:#ffffff;"></div>
<div class="a" style="left:617px;top:518px;width:24px;height:15px;background:#ffffff;"></div>
<div class="a" style="left:644px;top:501px;width:25px;height:32px;background:#ffffff;"></div>
<div class="a" style="left:617px;top:516px;width:5px;height:1.5px;background:#777;"></div>
<div class="a" style="left:617px;top:534px;width:5px;height:1px;background:#888;"></div>
<div class="a" style="left:644px;top:534px;width:5px;height:1px;background:#888;"></div>
<div class="a" style="left:664px;top:498px;width:6px;height:1px;background:#888;"></div>
<div class="a" style="left:552px;top:548px;width:121px;height:43px;background:#5a5a5a;"></div>
<div class="a" style="left:553px;top:549px;width:119px;height:41px;background:#ffffff;"></div>
<div class="a" style="left:553px;top:549px;width:39px;height:32px;background:#d5c4ae;"></div>
<div class="a" style="left:553px;top:580px;width:39px;height:1px;background:#6e625f;"></div>
<div class="a" style="left:553px;top:581px;width:39px;height:9px;background:#9c9090;"></div>
<div class="a" style="left:560px;top:556px;width:5px;height:5px;border-radius:50%;background:#a39180"></div>
<div class="a" style="left:592px;top:549px;width:20px;height:41px;background:#f4f4f4;"></div>
<div class="a" style="left:602px;top:550px;width:6px;height:1px;background:#aaa;"></div>
<div class="a" style="left:595px;top:557px;width:3px;height:3px;background:#555;"></div>
<div class="a" style="left:595px;top:561px;width:13px;height:2px;background:#5a5a5a;"></div>
<div class="a" style="left:595px;top:564px;width:11px;height:1px;background:#999;"></div>
<div class="a" style="left:595px;top:573px;width:4px;height:1px;background:#777;"></div>
<div class="a" style="left:595px;top:574px;width:15px;height:13px;background:#828282;"></div>
<div class="a" style="left:612px;top:548px;width:1.5px;height:43px;background:#5a5a5a;"></div>
<div class="a" style="left:614px;top:549px;width:58px;height:41px;background:#ffffff;"></div>
<div class="a" style="left:616px;top:553px;width:22px;height:19px;background:#ededed;"></div>
<div class="a" style="left:640px;top:553px;width:29px;height:19px;background:#ededed;"></div>
<div class="a" style="left:616px;top:573px;width:3px;height:1px;background:#888;"></div>
<div class="a" style="left:638px;top:573px;width:5px;height:1px;background:#888;"></div>
<div class="a" style="left:616px;top:575px;width:53px;height:9px;background:#efefef;"></div>
<div class="a" style="left:619px;top:578px;width:3px;height:3px;border-radius:50%;background:#bbb"></div>
<div class="a" style="left:616px;top:584px;width:53px;height:2px;background:#6b6262;"></div>
<div class="a" style="left:616px;top:586px;width:3px;height:1px;background:#888;"></div>
<div class="a" style="left:665px;top:550px;width:5px;height:1px;background:#aaa;"></div>
<div class="a" style="left:552px;top:599px;width:121px;height:43px;background:#5a5a5a;"></div>
<div class="a" style="left:553px;top:600px;width:119px;height:41px;background:#ffffff;"></div>
<div class="a" style="left:557px;top:604px;width:24px;height:18px;background:#ebebeb;"></div>
<div class="a" style="left:584px;top:604px;width:24px;height:18px;background:#ebebeb;"></div>
<div class="a" style="left:557px;top:623px;width:3px;height:1px;background:#888;"></div>
<div class="a" style="left:584px;top:623px;width:3px;height:1px;background:#888;"></div>
<div class="a" style="left:557px;top:625px;width:51px;height:10px;background:#eeeeee;"></div>
<div class="a" style="left:560px;top:628px;width:3px;height:3px;border-radius:50%;background:#bbb"></div>
<div class="a" style="left:557px;top:635px;width:51px;height:2px;background:#5e5757;"></div>
<div class="a" style="left:557px;top:637px;width:3px;height:1px;background:#888;"></div>
<div class="a" style="left:605px;top:601px;width:5px;height:1px;background:#aaa;"></div>
<div class="a" style="left:612px;top:599px;width:1.5px;height:43px;background:#5a5a5a;"></div>
<div class="a" style="left:614px;top:600px;width:58px;height:41px;background:#ffffff;"></div>
<div class="a" style="left:615px;top:601px;width:56px;height:39px;background:#ececec;"></div>
<div class="a" style="left:617px;top:604px;width:24px;height:15px;background:#ffffff;"></div>
<div class="a" style="left:617px;top:621px;width:24px;height:15px;background:#ffffff;"></div>
<div class="a" style="left:644px;top:604px;width:25px;height:32px;background:#ffffff;"></div>
<div class="a" style="left:617px;top:619px;width:5px;height:1.5px;background:#777;"></div>
<div class="a" style="left:617px;top:637px;width:5px;height:1px;background:#888;"></div>
<div class="a" style="left:644px;top:637px;width:5px;height:1px;background:#888;"></div>
<div class="a" style="left:664px;top:601px;width:6px;height:1px;background:#888;"></div>
<div class="a" style="left:552px;top:651px;width:121px;height:43px;background:#5a5a5a;"></div>
<div class="a" style="left:553px;top:652px;width:119px;height:41px;background:#ffffff;"></div>
<div class="a" style="left:553px;top:652px;width:39px;height:32px;background:#d5c4ae;"></div>
<div class="a" style="left:553px;top:683px;width:39px;height:1px;background:#6e625f;"></div>
<div class="a" style="left:553px;top:684px;width:39px;height:9px;background:#9c9090;"></div>
<div class="a" style="left:560px;top:659px;width:5px;height:5px;border-radius:50%;background:#a39180"></div>
<div class="a" style="left:592px;top:652px;width:20px;height:41px;background:#f4f4f4;"></div>
<div class="a" style="left:602px;top:653px;width:6px;height:1px;background:#aaa;"></div>
<div class="a" style="left:595px;top:660px;width:3px;height:3px;background:#555;"></div>
<div class="a" style="left:595px;top:664px;width:13px;height:2px;background:#5a5a5a;"></div>
<div class="a" style="left:595px;top:667px;width:11px;height:1px;background:#999;"></div>
<div class="a" style="left:595px;top:676px;width:4px;height:1px;background:#777;"></div>
<div class="a" style="left:595px;top:677px;width:15px;height:13px;background:#828282;"></div>
<div class="a" style="left:612px;top:651px;width:1.5px;height:43px;background:#5a5a5a;"></div>
<div class="a" style="left:614px;top:652px;width:58px;height:41px;background:#ffffff;"></div>
<div class="a" style="left:616px;top:656px;width:22px;height:19px;background:#ededed;"></div>
<div class="a" style="left:640px;top:656px;width:29px;height:19px;background:#ededed;"></div>
<div class="a" style="left:616px;top:676px;width:3px;height:1px;background:#888;"></div>
<div class="a" style="left:638px;top:676px;width:5px;height:1px;background:#888;"></div>
<div class="a" style="left:616px;top:678px;width:53px;height:9px;background:#efefef;"></div>
<div class="a" style="left:619px;top:681px;width:3px;height:3px;border-radius:50%;background:#bbb"></div>
<div class="a" style="left:616px;top:687px;width:53px;height:2px;background:#6b6262;"></div>
<div class="a" style="left:616px;top:689px;width:3px;height:1px;background:#888;"></div>
<div class="a" style="left:665px;top:653px;width:5px;height:1px;background:#aaa;"></div>
<div class="a" style="left:552px;top:702px;width:121px;height:43px;background:#5a5a5a;"></div>
<div class="a" style="left:553px;top:703px;width:119px;height:41px;background:#ffffff;"></div>
<div class="a" style="left:557px;top:707px;width:24px;height:18px;background:#ebebeb;"></div>
<div class="a" style="left:584px;top:707px;width:24px;height:18px;background:#ebebeb;"></div>
<div class="a" style="left:557px;top:726px;width:3px;height:1px;background:#888;"></div>
<div class="a" style="left:584px;top:726px;width:3px;height:1px;background:#888;"></div>
<div class="a" style="left:557px;top:728px;width:51px;height:10px;background:#eeeeee;"></div>
<div class="a" style="left:560px;top:731px;width:3px;height:3px;border-radius:50%;background:#bbb"></div>
<div class="a" style="left:557px;top:738px;width:51px;height:2px;background:#5e5757;"></div>
<div class="a" style="left:557px;top:740px;width:3px;height:1px;background:#888;"></div>
<div class="a" style="left:605px;top:704px;width:5px;height:1px;background:#aaa;"></div>
<div class="a" style="left:612px;top:702px;width:1.5px;height:43px;background:#5a5a5a;"></div>
<div class="a" style="left:614px;top:703px;width:58px;height:41px;background:#ffffff;"></div>
<div class="a" style="left:615px;top:704px;width:56px;height:39px;background:#ececec;"></div>
<div class="a" style="left:617px;top:707px;width:24px;height:15px;background:#ffffff;"></div>
<div class="a" style="left:617px;top:724px;width:24px;height:15px;background:#ffffff;"></div>
<div class="a" style="left:644px;top:707px;width:25px;height:32px;background:#ffffff;"></div>
<div class="a" style="left:617px;top:722px;width:5px;height:1.5px;background:#777;"></div>
<div class="a" style="left:617px;top:740px;width:5px;height:1px;background:#888;"></div>
<div class="a" style="left:644px;top:740px;width:5px;height:1px;background:#888;"></div>
<div class="a" style="left:664px;top:704px;width:6px;height:1px;background:#888;"></div>
<div class="a" style="left:552px;top:753px;width:121px;height:43px;background:#5a5a5a;"></div>
<div class="a" style="left:553px;top:754px;width:119px;height:41px;background:#ffffff;"></div>
<div class="a" style="left:553px;top:754px;width:39px;height:32px;background:#d5c4ae;"></div>
<div class="a" style="left:553px;top:785px;width:39px;height:1px;background:#6e625f;"></div>
<div class="a" style="left:553px;top:786px;width:39px;height:9px;background:#9c9090;"></div>
<div class="a" style="left:560px;top:761px;width:5px;height:5px;border-radius:50%;background:#a39180"></div>
<div class="a" style="left:592px;top:754px;width:20px;height:41px;background:#f4f4f4;"></div>
<div class="a" style="left:602px;top:755px;width:6px;height:1px;background:#aaa;"></div>
<div class="a" style="left:595px;top:762px;width:3px;height:3px;background:#555;"></div>
<div class="a" style="left:595px;top:766px;width:13px;height:2px;background:#5a5a5a;"></div>
<div class="a" style="left:595px;top:769px;width:11px;height:1px;background:#999;"></div>
<div class="a" style="left:595px;top:778px;width:4px;height:1px;background:#777;"></div>
<div class="a" style="left:595px;top:779px;width:15px;height:13px;background:#828282;"></div>
<div class="a" style="left:612px;top:753px;width:1.5px;height:43px;background:#5a5a5a;"></div>
<div class="a" style="left:614px;top:754px;width:58px;height:41px;background:#ffffff;"></div>
<div class="a" style="left:616px;top:758px;width:22px;height:19px;background:#ededed;"></div>
<div class="a" style="left:640px;top:758px;width:29px;height:19px;background:#ededed;"></div>
<div class="a" style="left:616px;top:778px;width:3px;height:1px;background:#888;"></div>
<div class="a" style="left:638px;top:778px;width:5px;height:1px;background:#888;"></div>
<div class="a" style="left:616px;top:780px;width:53px;height:9px;background:#efefef;"></div>
<div class="a" style="left:619px;top:783px;width:3px;height:3px;border-radius:50%;background:#bbb"></div>
<div class="a" style="left:616px;top:789px;width:53px;height:2px;background:#6b6262;"></div>
<div class="a" style="left:616px;top:791px;width:3px;height:1px;background:#888;"></div>
<div class="a" style="left:665px;top:755px;width:5px;height:1px;background:#aaa;"></div>
<div class="a" style="left:4px;top:106px;width:30px;height:486px;background:#535353;"></div>
<div class="a" style="left:4px;top:106px;width:1px;height:486px;background:#464646;"></div>
<div class="a" style="left:4px;top:97px;width:30px;height:9.5px;background:#464646;"></div>
<div class="a" style="left:0px;top:97px;width:4px;height:9px;background:#3a3a3a;"></div>
<div class="a" style="left:1px;top:98px;width:2.5px;height:7px;background:#111;"></div>
<svg class="a" style="left:11px;top:101px;" width="6" height="4" viewBox="0 0 6 4"><path d="M0 0 L2.5 2 L0 4 Z M3.2 0 L5.7 2 L3.2 4 Z" fill="#e0e0e0"/></svg>
<svg class="a" style="left:25px;top:100.5px;" width="5" height="5" viewBox="0 0 5 5"><path d="M0.5 0.5 L4.5 4.5 M4.5 0.5 L0.5 4.5" stroke="#c8c8c8" stroke-width="1.2"/></svg>
<svg class="a" style="left:11px;top:110px;" width="16" height="2" viewBox="0 0 16 2"><path d="M0 1h2 M3 1h3 M7 1h2 M10 1h3 M14 1h2" stroke="#6a6a6a" stroke-width="1.2"/></svg>
<div class="a" style="left:8px;top:119px;width:21px;height:16px;background:#393939;border-radius:2px"></div>
<svg class="a" style="left:14px;top:121px;" width="10" height="13" viewBox="0 0 10 13"><path d="M1 1 L9 9 L1 12 Z" stroke="#cfcfcf" stroke-width="1" fill="none"/></svg>
<svg class="a" style="left:14px;top:139px;" width="10" height="13" viewBox="0 0 10 13"><path d="M1 0.5 L1 12.5 L9.5 7 Z" fill="#cfcfcf"/></svg>
<svg class="a" style="left:13px;top:157px;" width="13" height="13" viewBox="0 0 13 13"><path d="M1 1 H6 L9 4 V6 M1 1 V12 H7" stroke="#cfcfcf" stroke-width="1" fill="none"/><path d="M8 7 L12.5 10 L8 13 Z" fill="#cfcfcf"/></svg>
<svg class="a" style="left:11px;top:176px;" width="16" height="11" viewBox="0 0 16 11"><path d="M1 0 V11 M15 0 V11 M3 5.5 H13 M5 3.5 L3 5.5 L5 7.5 M11 3.5 L13 5.5 L11 7.5" stroke="#cfcfcf" stroke-width="1.2" fill="none"/></svg>
<svg class="a" style="left:12px;top:193px;" width="15" height="14" viewBox="0 0 15 14"><path d="M1 5 V12 H12 V5" stroke="#cfcfcf" stroke-width="1.3" fill="none"/><path d="M3 9h7 M3 11h7" stroke="#cfcfcf"/><path d="M5 0 L9 4 M9 1 V4 H6" stroke="#cfcfcf" stroke-width="1.2" fill="none"/><rect x="13" y="12" width="2" height="2" fill="#cfcfcf"/></svg>
<svg class="a" style="left:12px;top:214px;" width="14" height="13" viewBox="0 0 14 13"><path d="M1 1.5 H12 M6.5 1.5 V11.5 M4 11.5 H9 M1 1 V3.5 M12 1 V3.5" stroke="#cfcfcf" stroke-width="1.8" fill="none"/><rect x="12" y="11" width="2" height="2" fill="#cfcfcf"/></svg>
<svg class="a" style="left:12px;top:232px;" width="13" height="13" viewBox="0 0 13 13"><path d="M1 12 L12 1" stroke="#cfcfcf" stroke-width="1.3"/></svg>
<svg class="a" style="left:11px;top:250px;" width="16" height="14" viewBox="0 0 16 14"><path d="M1 4 h5 M3.5 1.5 v5" stroke="#cfcfcf" stroke-width="1.3"/><path d="M6 12 L10 3 L13 6 L8 13 Z" fill="#cfcfcf"/><rect x="14" y="12" width="2" height="2" fill="#cfcfcf"/></svg>
<svg class="a" style="left:12px;top:268px;" width="15" height="14" viewBox="0 0 15 14"><path d="M2 12 L3 9 L10 2 L12 4 L5 11 Z" stroke="#cfcfcf" stroke-width="1.4" fill="none"/><rect x="13" y="12" width="2" height="2" fill="#cfcfcf"/></svg>
<svg class="a" style="left:11px;top:287px;" width="16" height="14" viewBox="0 0 16 14"><circle cx="7" cy="6.5" r="5.5" stroke="#cfcfcf" stroke-width="1.2" fill="none"/><path d="M3.5 3 L10.5 10 M10.5 3 L3.5 10" stroke="#cfcfcf" stroke-width="1.1"/><rect x="14" y="12" width="2" height="2" fill="#cfcfcf"/></svg>
<svg class="a" style="left:11px;top:304px;" width="16" height="14" viewBox="0 0 16 14"><rect x="1" y="1" width="11" height="10" stroke="#cfcfcf" stroke-width="1.3" fill="none"/><rect x="14" y="12" width="2" height="2" fill="#cfcfcf"/></svg>
<svg class="a" style="left:11px;top:325px;" width="14" height="12" viewBox="0 0 14 12"><circle cx="3" cy="9" r="2.3" stroke="#cfcfcf" stroke-width="1.2" fill="none"/><circle cx="11" cy="9" r="2.3" stroke="#cfcfcf" stroke-width="1.2" fill="none"/><path d="M4.5 7 L11 0.5 M9.5 7 L3 0.5" stroke="#cfcfcf" stroke-width="1.2"/></svg>
<svg class="a" style="left:11px;top:342px;" width="16" height="14" viewBox="0 0 16 14"><path d="M3 1 H13 V11 H3 Z" stroke="#cfcfcf" stroke-dasharray="2 1" fill="none"/><path d="M1 1 L8 7 L1 12 Z" fill="#cfcfcf"/><rect x="14" y="12" width="2" height="2" fill="#cfcfcf"/></svg>
<div class="a" style="left:13px;top:361px;width:12px;height:12px;background:linear-gradient(90deg,#3a3a3a,#e8e8e8);border:1px solid #cfcfcf"></div>
<div class="a" style="left:13px;top:380px;width:12px;height:12px;background:repeating-conic-gradient(#ddd 0 25%,#444 0 50%) 0 0/4px 4px;border:1px solid #cfcfcf"></div>
<svg class="a" style="left:13px;top:399px;" width="13" height="13" viewBox="0 0 13 13"><path d="M1 1 H12 V8 L8 12 H1 Z" stroke="#cfcfcf" stroke-width="1.2" fill="#707070"/><path d="M3 4h7 M3 6h7 M3 8h4" stroke="#cfcfcf"/></svg>
<svg class="a" style="left:12px;top:418px;" width="15" height="14" viewBox="0 0 15 14"><path d="M1.5 12.5 L2 10.5 L8 4.5 L9.5 6 L3.5 12 Z" stroke="#cfcfcf" stroke-width="1.1" fill="none"/><path d="M7.5 3.5 L10.5 6.5 M9 5 L11.5 2.5 a1.4 1.4 0 0 0 -2 -2 L7 3" stroke="#cfcfcf" stroke-width="1.8" fill="#cfcfcf"/><rect x="13" y="12" width="2" height="2" fill="#cfcfcf"/></svg>
<svg class="a" style="left:12px;top:436px;" width="14" height="13" viewBox="0 0 14 13"><path d="M3 12 C1 9 1 6 2 5 M4 7 V2 M6.5 6 V1 M9 6 V1.5 M11.5 7 V3 M2 5 L4 8 M11.5 7 C12 10 10 12 8 12 H4" stroke="#cfcfcf" stroke-width="1.6" fill="none" stroke-linecap="round"/></svg>
<svg class="a" style="left:12px;top:454px;" width="13" height="13" viewBox="0 0 13 13"><circle cx="5" cy="5" r="4" stroke="#cfcfcf" stroke-width="1.3" fill="none"/><path d="M8 8 L12.5 12.5" stroke="#cfcfcf" stroke-width="1.6"/></svg>
<svg class="a" style="left:7px;top:472px;" width="11" height="10" viewBox="0 0 11 10"><rect x="0.5" y="0.5" width="7" height="7" fill="#222" stroke="#ddd"/><rect x="3" y="3" width="7.5" height="6.5" fill="#fff" stroke="#222"/><circle cx="5" cy="5" r="2" fill="#eee"/></svg>
<svg class="a" style="left:21px;top:473px;" width="10" height="10" viewBox="0 0 10 10"><path d="M1 3 H7 V9 M5 7 L7 9.5 L9 7 M3 1 L1 3 L3 5" stroke="#cfcfcf" stroke-width="1.2" fill="none"/></svg>
<div class="a" style="left:15px;top:493px;width:15px;height:15px;background:#ffffff;"></div>
<div class="a" style="left:18px;top:496px;width:9px;height:9px;background:#4a4a4a;"></div>
<svg class="a" style="left:15px;top:493px;" width="15" height="15" viewBox="0 0 15 15"><path d="M1 14 L14 1" stroke="#d21f2c" stroke-width="1.8"/></svg>
<div class="a" style="left:8px;top:485px;width:15px;height:16px;background:#efefef;border:1px solid #6a6a6a"></div>
<div class="a" style="left:9px;top:486px;width:13px;height:14px;background:#ebe7dd;"></div>
<div class="a" style="left:9px;top:514px;width:8px;height:8px;background:#2c2c2c;border:1px solid #cfcfcf"></div>
<svg class="a" style="left:22px;top:514px;" width="9" height="9" viewBox="0 0 9 9"><path d="M1 1.5 H8 M4.5 1.5 V8 M3 8 H6" stroke="#cfcfcf" stroke-width="1.3" fill="none"/></svg>
<div class="a" style="left:8px;top:528px;width:21px;height:17px;background:#2e2e2e;border-radius:2px"></div>
<div class="a" style="left:12px;top:531px;width:12px;height:11px;background:#ebe7dd;border:1px solid #9a9a9a"></div>
<svg class="a" style="left:26px;top:542px;" width="3" height="3" viewBox="0 0 3 3"><path d="M0 3 L3 0 V3 Z" fill="#ccc"/></svg>
<svg class="a" style="left:13px;top:552px;" width="13" height="12" viewBox="0 0 13 12"><rect x="5" y="1" width="8" height="5" fill="none" stroke="#aaa" stroke-dasharray="1 1"/><rect x="5" y="6" width="8" height="5" fill="#bbb"/><path d="M1 6h3 M1 9h3" stroke="#aaa"/></svg>
<div class="a" style="left:8px;top:570px;width:21px;height:17px;background:#2e2e2e;border-radius:2px"></div>
<div class="a" style="left:13px;top:574px;width:11px;height:9px;background:#2e2e2e;border:1.3px solid #cfcfcf"></div>
<div class="a" style="left:14px;top:576px;width:9px;height:1.3px;background:#cfcfcf;"></div>
<svg class="a" style="left:26px;top:584px;" width="3" height="3" viewBox="0 0 3 3"><path d="M0 3 L3 0 V3 Z" fill="#ccc"/></svg>
<div class="a" style="left:1217px;top:94px;width:11px;height:678px;background:#474747;"></div>
<svg class="a" style="left:1219px;top:98px;" width="7" height="5" viewBox="0 0 7 5"><path d="M0.5 4 L3.5 1 L6.5 4" stroke="#6e6e6e" fill="none"/></svg>
<div class="a" style="left:1218px;top:106px;width:9px;height:530px;background:#5d5d5d;border-radius:4px 4px 4px 4px"></div>
<svg class="a" style="left:1219px;top:763px;" width="7" height="5" viewBox="0 0 7 5"><path d="M0.5 1 L3.5 4 L6.5 1" stroke="#6e6e6e" fill="none"/></svg>
<div class="a" style="left:1228px;top:72px;width:217px;height:714px;background:#3d3d3d;"></div>
<div class="a" style="left:1228px;top:72px;width:217px;height:9px;background:#424242;"></div>
<svg class="a" style="left:1248.5px;top:75.5px;" width="6" height="4" viewBox="0 0 6 4"><path d="M2.5 0 L0 2 L2.5 4 Z M5.7 0 L3.2 2 L5.7 4 Z" fill="#e0e0e0"/></svg>
<svg class="a" style="left:1435.5px;top:75.5px;" width="6" height="4" viewBox="0 0 6 4"><path d="M0 0 L2.5 2 L0 4 Z M3.2 0 L5.7 2 L3.2 4 Z" fill="#e0e0e0"/></svg>
<div class="a" style="left:1230px;top:81px;width:28px;height:703px;background:#535353;"></div>
<div class="a" style="left:1230px;top:111px;width:28px;height:1.5px;background:#464646;"></div>
<svg class="a" style="left:1237px;top:85px;" width="14" height="2" viewBox="0 0 14 2"><path d="M0 1h2 M3 1h3 M7 1h2 M10 1h4" stroke="#6a6a6a" stroke-width="1.2"/></svg>
<div class="a" style="left:1230px;top:142px;width:28px;height:1.5px;background:#464646;"></div>
<svg class="a" style="left:1237px;top:116px;" width="14" height="2" viewBox="0 0 14 2"><path d="M0 1h2 M3 1h3 M7 1h2 M10 1h4" stroke="#6a6a6a" stroke-width="1.2"/></svg>
<div class="a" style="left:1230px;top:173px;width:28px;height:1.5px;background:#464646;"></div>
<svg class="a" style="left:1237px;top:147px;" width="14" height="2" viewBox="0 0 14 2"><path d="M0 1h2 M3 1h3 M7 1h2 M10 1h4" stroke="#6a6a6a" stroke-width="1.2"/></svg>
<div class="a" style="left:1230px;top:203px;width:28px;height:1.5px;background:#464646;"></div>
<svg class="a" style="left:1237px;top:177px;" width="14" height="2" viewBox="0 0 14 2"><path d="M0 1h2 M3 1h3 M7 1h2 M10 1h4" stroke="#6a6a6a" stroke-width="1.2"/></svg>
<svg class="a" style="left:1238px;top:93px;" width="14" height="14" viewBox="0 0 14 14"><path d="M0 1h5 M0 9h4" stroke="#cfcfcf" stroke-width="1.4"/><rect x="4" y="3" width="9" height="2" fill="#cfcfcf"/><rect x="4" y="6" width="9" height="2" fill="#cfcfcf"/><rect x="4" y="11" width="9" height="2" fill="#cfcfcf"/></svg>
<svg class="a" style="left:1238px;top:123px;" width="14" height="15" viewBox="0 0 14 15"><path d="M1 1.5 H12 M6.5 1.5 V10 M4 10 H9 M1 1 V3.5 M12 1 V3.5" stroke="#cfcfcf" stroke-width="1.8" fill="none"/><path d="M1 13 q1.5 -1.5 3 0 t3 0 t3 0 t3 0" stroke="#cfcfcf" fill="none"/></svg>
<svg class="a" style="left:1238px;top:155px;" width="14" height="14" viewBox="0 0 14 14"><path d="M6 2 L2 5 L5 8 M8 12 L12 9 L9 6" stroke="#cfcfcf" stroke-width="2.2" fill="none"/><circle cx="7" cy="7" r="1.6" fill="#cfcfcf"/></svg>
<svg class="a" style="left:1241px;top:185px;" width="9" height="14" viewBox="0 0 9 14"><path d="M0.5 0.5 H8.5 V13.5 L4.5 10 L0.5 13.5 Z" fill="#cfcfcf"/></svg>
<div class="a" style="left:1261px;top:81px;width:184px;height:475px;background:#535353;"></div>
<div class="a" style="left:1307px;top:81px;width:138px;height:21px;background:#424242;"></div>
<div class="a" style="left:1350px;top:83px;width:1px;height:17px;background:#3a3a3a;"></div>
<div class="a" style="left:1389px;top:83px;width:1px;height:17px;background:#3a3a3a;"></div>
<svg class="a" style="left:1266px;top:87px;" width="5" height="9" viewBox="0 0 5 9"><path d="M0.5 3 L2.5 1 L4.5 3 M0.5 6 L2.5 8 L4.5 6" stroke="#d0d0d0" fill="none"/></svg>
<div class="t" style="left:1274px;top:87.88px;font-size:9px;color:#f0f0f0;font-weight:bold;-webkit-text-stroke:0;transform:scaleX(0.867);transform-origin:0 0;">Pages</div>
<div class="t" style="left:1316px;top:87.88px;font-size:9px;color:#bdbdbd;transform:scaleX(0.926);transform-origin:0 0;">Layers</div>
<div class="t" style="left:1360px;top:87.88px;font-size:9px;color:#bdbdbd;transform:scaleX(0.952);transform-origin:0 0;">Links</div>
<div class="a" style="left:1433.5px;top:89px;width:8px;height:6px;background:#7c7c7c;"></div>
<svg class="a" style="left:1433.5px;top:89px;" width="8" height="6" viewBox="0 0 8 6"><path d="M0 2h8 M0 4h8" stroke="#6a6a6a" stroke-width="0.8"/></svg>
<div class="t" style="left:1263px;top:109.30px;font-size:8.5px;color:#e0e0e0;transform:scaleX(0.958);transform-origin:0 0;">[None]</div>
<div class="a" style="left:1404px;top:106px;width:26px;height:17px;background:#ffffff;"></div>
<div class="t" style="left:1263px;top:130.80px;font-size:8.5px;color:#e0e0e0;transform:scaleX(0.894);transform-origin:0 0;">A-Parent</div>
<div class="a" style="left:1378px;top:127px;width:25px;height:17px;background:#ffffff;"></div>
<div class="a" style="left:1404px;top:127px;width:26px;height:17px;background:#ffffff;"></div>
<div class="a" style="left:1261px;top:162px;width:184px;height:1px;background:#454545;"></div>
<div class="a" style="left:1261px;top:163px;width:184px;height:1px;background:#5c5c5c;"></div>
<div class="a" style="left:1435px;top:165px;width:10px;height:370px;background:#4d4d4d;"></div>
<div class="a" style="left:1436px;top:180px;width:8px;height:170px;background:#5d5d5d;border-radius:4px"></div>
<svg class="a" style="left:1437px;top:168px;" width="7" height="4" viewBox="0 0 7 4"><path d="M0.5 3.5 L3.5 0.5 L6.5 3.5" stroke="#707070" fill="none"/></svg>
<svg class="a" style="left:1437px;top:524px;" width="7" height="4" viewBox="0 0 7 4"><path d="M0.5 0.5 L3.5 3.5 L6.5 0.5" stroke="#707070" fill="none"/></svg>
<div class="a" style="left:1348px;top:166px;width:1px;height:36px;background:#a8a8a8;"></div>
<div class="a" style="left:1348px;top:215px;width:1px;height:318px;background:#a8a8a8;"></div>
<svg class="a" style="left:1363px;top:167px;" width="10" height="5" viewBox="0 0 10 5"><path d="M0 0 H10 L5 5 Z" fill="#f0f0f0"/></svg>
<div class="a" style="left:1349px;top:171px;width:38px;height:27px;background:#7ba2d4;"></div>
<div class="a" style="left:1376px;top:180px;width:2px;height:1px;background:#3a5f90;"></div>
<div class="a" style="left:1376px;top:184px;width:3px;height:1px;background:#3a5f90;"></div>
<div class="a" style="left:1377px;top:188px;width:1px;height:2px;background:#3a5f90;"></div>
<div class="a" style="left:1352px;top:194px;width:3px;height:1px;background:#5a7fb0;"></div>
<div class="a" style="left:1362px;top:202px;width:9px;height:11px;background:#2c7ce0;"></div>
<div class="t" style="left:1364px;top:204.23px;font-size:8px;color:#ffffff;font-weight:bold;-webkit-text-stroke:0;transform:scaleX(1.012);transform-origin:0 0;">1</div>
<div class="a" style="left:1310px;top:220px;width:77px;height:27px;background:#f3f3f3;"></div>
<div class="a" style="left:1310px;top:220px;width:14px;height:27px;background:#aeaea4;"></div>
<div class="a" style="left:1349px;top:220px;width:14px;height:27px;background:#aeaea4;"></div>
<div class="a" style="left:1314px;top:232px;width:6px;height:1.5px;background:#f0f0f0;"></div>
<div class="a" style="left:1352px;top:232px;width:8px;height:1.5px;background:#f0f0f0;"></div>
<div class="a" style="left:1327px;top:225px;width:3px;height:3px;background:#222;"></div>
<div class="a" style="left:1327px;top:231px;width:6px;height:1px;background:#222;"></div>
<div class="a" style="left:1327px;top:240px;width:6px;height:2px;background:#222;"></div>
<div class="a" style="left:1338px;top:226px;width:2px;height:12px;background:#333;"></div>
<div class="a" style="left:1337px;top:240px;width:4px;height:2px;background:#222;"></div>
<div class="a" style="left:1366px;top:227px;width:4px;height:4px;background:#8c807d;border-radius:50%"></div>
<div class="a" style="left:1366px;top:232px;width:4px;height:1px;background:#555;"></div>
<div class="a" style="left:1366px;top:234px;width:4px;height:4px;background:#8c807d;border-radius:50%"></div>
<div class="a" style="left:1366px;top:239px;width:4px;height:1px;background:#555;"></div>
<div class="a" style="left:1372px;top:227px;width:4px;height:4px;background:#8c807d;border-radius:50%"></div>
<div class="a" style="left:1372px;top:232px;width:4px;height:1px;background:#555;"></div>
<div class="a" style="left:1372px;top:234px;width:4px;height:4px;background:#8c807d;border-radius:50%"></div>
<div class="a" style="left:1372px;top:239px;width:4px;height:1px;background:#555;"></div>
<div class="a" style="left:1378px;top:227px;width:4px;height:4px;background:#8c807d;border-radius:50%"></div>
<div class="a" style="left:1378px;top:232px;width:4px;height:1px;background:#555;"></div>
<div class="a" style="left:1378px;top:234px;width:4px;height:4px;background:#8c807d;border-radius:50%"></div>
<div class="a" style="left:1378px;top:239px;width:4px;height:1px;background:#555;"></div>
<div class="a" style="left:1348px;top:215px;width:1px;height:318px;background:#a0a0a0;"></div>
<div class="t" style="left:1341px;top:252.30px;font-size:8.5px;color:#e6e6e6;transform:scaleX(0.895);transform-origin:0 0;">2-3</div>
<div class="a" style="left:1310px;top:268.5px;width:77px;height:26px;background:#ffffff;"></div>
<div class="a" style="left:1310px;top:268.5px;width:25px;height:21px;background:#d5c4ae;"></div>
<div class="a" style="left:1310px;top:289.5px;width:25px;height:5px;background:#9c9090;"></div>
<div class="a" style="left:1313px;top:272.5px;width:3px;height:3px;background:#a08a85;border-radius:50%"></div>
<div class="a" style="left:1335px;top:268.5px;width:13px;height:26px;background:#f4f4f4;"></div>
<div class="a" style="left:1337px;top:273.5px;width:9px;height:2px;background:#333;"></div>
<div class="a" style="left:1337px;top:277.5px;width:6px;height:1px;background:#888;"></div>
<div class="a" style="left:1337px;top:284.5px;width:9px;height:9px;background:#8a8a8a;"></div>
<div class="a" style="left:1349px;top:270.5px;width:37px;height:22px;background:#efefef;"></div>
<div class="a" style="left:1349px;top:290.5px;width:37px;height:2px;background:#6d6d6d;"></div>
<div class="a" style="left:1348px;top:268.5px;width:1px;height:27px;background:#d0d0d0;"></div>
<div class="t" style="left:1343.0px;top:300.30px;font-size:8.5px;color:#e6e6e6;transform:scaleX(0.895);transform-origin:0 0;">4-5</div>
<div class="a" style="left:1310px;top:316.8px;width:77px;height:26px;background:#ffffff;"></div>
<div class="a" style="left:1312px;top:318.8px;width:17px;height:14px;background:#eeeeee;"></div>
<div class="a" style="left:1330px;top:318.8px;width:17px;height:14px;background:#eeeeee;"></div>
<div class="a" style="left:1312px;top:333.8px;width:35px;height:6px;background:#efefef;"></div>
<div class="a" style="left:1312px;top:339.8px;width:35px;height:2px;background:#6d6d6d;"></div>
<div class="a" style="left:1349px;top:317.8px;width:37px;height:24px;background:#eaeaea;"></div>
<div class="a" style="left:1350px;top:318.8px;width:18px;height:10px;background:#ffffff;"></div>
<div class="a" style="left:1350px;top:329.8px;width:18px;height:11px;background:#ffffff;"></div>
<div class="a" style="left:1369px;top:318.8px;width:16px;height:22px;background:#ffffff;"></div>
<div class="a" style="left:1348px;top:316.8px;width:1px;height:27px;background:#d0d0d0;"></div>
<div class="t" style="left:1343.0px;top:348.60px;font-size:8.5px;color:#e6e6e6;transform:scaleX(0.895);transform-origin:0 0;">6-7</div>
<div class="a" style="left:1310px;top:365.1px;width:77px;height:26px;background:#ffffff;"></div>
<div class="a" style="left:1310px;top:365.1px;width:25px;height:21px;background:#d5c4ae;"></div>
<div class="a" style="left:1310px;top:386.1px;width:25px;height:5px;background:#9c9090;"></div>
<div class="a" style="left:1313px;top:369.1px;width:3px;height:3px;background:#a08a85;border-radius:50%"></div>
<div class="a" style="left:1335px;top:365.1px;width:13px;height:26px;background:#f4f4f4;"></div>
<div class="a" style="left:1337px;top:370.1px;width:9px;height:2px;background:#333;"></div>
<div class="a" style="left:1337px;top:374.1px;width:6px;height:1px;background:#888;"></div>
<div class="a" style="left:1337px;top:381.1px;width:9px;height:9px;background:#8a8a8a;"></div>
<div class="a" style="left:1349px;top:367.1px;width:37px;height:22px;background:#efefef;"></div>
<div class="a" style="left:1349px;top:387.1px;width:37px;height:2px;background:#6d6d6d;"></div>
<div class="a" style="left:1348px;top:365.1px;width:1px;height:27px;background:#d0d0d0;"></div>
<div class="t" style="left:1343.0px;top:396.90px;font-size:8.5px;color:#e6e6e6;transform:scaleX(0.895);transform-origin:0 0;">8-9</div>
<div class="a" style="left:1310px;top:413.4px;width:77px;height:26px;background:#ffffff;"></div>
<div class="a" style="left:1312px;top:415.4px;width:17px;height:14px;background:#eeeeee;"></div>
<div class="a" style="left:1330px;top:415.4px;width:17px;height:14px;background:#eeeeee;"></div>
<div class="a" style="left:1312px;top:430.4px;width:35px;height:6px;background:#efefef;"></div>
<div class="a" style="left:1312px;top:436.4px;width:35px;height:2px;background:#6d6d6d;"></div>
<div class="a" style="left:1349px;top:414.4px;width:37px;height:24px;background:#eaeaea;"></div>
<div class="a" style="left:1350px;top:415.4px;width:18px;height:10px;background:#ffffff;"></div>
<div class="a" style="left:1350px;top:426.4px;width:18px;height:11px;background:#ffffff;"></div>
<div class="a" style="left:1369px;top:415.4px;width:16px;height:22px;background:#ffffff;"></div>
<div class="a" style="left:1348px;top:413.4px;width:1px;height:27px;background:#d0d0d0;"></div>
<div class="t" style="left:1340.0px;top:445.20px;font-size:8.5px;color:#e6e6e6;transform:scaleX(0.805);transform-origin:0 0;">10-11</div>
<div class="a" style="left:1310px;top:461.7px;width:77px;height:26px;background:#ffffff;"></div>
<div class="a" style="left:1310px;top:461.7px;width:25px;height:21px;background:#d5c4ae;"></div>
<div class="a" style="left:1310px;top:482.7px;width:25px;height:5px;background:#9c9090;"></div>
<div class="a" style="left:1313px;top:465.7px;width:3px;height:3px;background:#a08a85;border-radius:50%"></div>
<div class="a" style="left:1335px;top:461.7px;width:13px;height:26px;background:#f4f4f4;"></div>
<div class="a" style="left:1337px;top:466.7px;width:9px;height:2px;background:#333;"></div>
<div class="a" style="left:1337px;top:470.7px;width:6px;height:1px;background:#888;"></div>
<div class="a" style="left:1337px;top:477.7px;width:9px;height:9px;background:#8a8a8a;"></div>
<div class="a" style="left:1349px;top:463.7px;width:37px;height:22px;background:#efefef;"></div>
<div class="a" style="left:1349px;top:483.7px;width:37px;height:2px;background:#6d6d6d;"></div>
<div class="a" style="left:1348px;top:461.7px;width:1px;height:27px;background:#d0d0d0;"></div>
<div class="t" style="left:1340.0px;top:493.50px;font-size:8.5px;color:#e6e6e6;transform:scaleX(0.782);transform-origin:0 0;">12-13</div>
<div class="a" style="left:1310px;top:510.0px;width:77px;height:26px;background:#ffffff;"></div>
<div class="a" style="left:1312px;top:512.0px;width:17px;height:14px;background:#eeeeee;"></div>
<div class="a" style="left:1330px;top:512.0px;width:17px;height:14px;background:#eeeeee;"></div>
<div class="a" style="left:1312px;top:527.0px;width:35px;height:6px;background:#efefef;"></div>
<div class="a" style="left:1312px;top:533.0px;width:35px;height:2px;background:#6d6d6d;"></div>
<div class="a" style="left:1349px;top:511.0px;width:37px;height:24px;background:#eaeaea;"></div>
<div class="a" style="left:1350px;top:512.0px;width:18px;height:10px;background:#ffffff;"></div>
<div class="a" style="left:1350px;top:523.0px;width:18px;height:11px;background:#ffffff;"></div>
<div class="a" style="left:1369px;top:512.0px;width:16px;height:22px;background:#ffffff;"></div>
<div class="a" style="left:1348px;top:510.0px;width:1px;height:27px;background:#d0d0d0;"></div>
<div class="a" style="left:1261px;top:533px;width:184px;height:20px;background:#535353;"></div>
<div class="t" style="left:1265px;top:539.80px;font-size:8.5px;color:#e0e0e0;transform:scaleX(0.860);transform-origin:0 0;">28 Pages in 15 Spreads</div>
<svg class="a" style="left:1374px;top:538px;" width="12" height="10" viewBox="0 0 12 10"><path d="M1 9 L3 2 H8 L11 9 Z M5 4 L9 4" stroke="#bbb" fill="none"/><rect x="10" y="8" width="1.5" height="1.5" fill="#bbb"/></svg>
<svg class="a" style="left:1398px;top:538px;" width="10" height="10" viewBox="0 0 10 10"><rect x="0.5" y="0.5" width="9" height="9" stroke="#cfcfcf" fill="none"/><path d="M5 2.5v5 M2.5 5h5" stroke="#cfcfcf"/></svg>
<svg class="a" style="left:1418px;top:538px;" width="9" height="10" viewBox="0 0 9 10"><path d="M0 1.5h9 M1.5 2 V9.5 H7.5 V2 M3.5 0.5h2 M3.5 4v4 M5.5 4v4" stroke="#8a8a8a" fill="none"/></svg>
<div class="a" style="left:1261px;top:553px;width:184px;height:1px;background:#3d3d3d;"></div>
<div class="a" style="left:1261px;top:554px;width:184px;height:87px;background:#535353;"></div>
<div class="a" style="left:1348px;top:554px;width:97px;height:20px;background:#424242;"></div>
<svg class="a" style="left:1266px;top:561px;" width="5" height="9" viewBox="0 0 5 9"><path d="M0.5 3 L2.5 1 L4.5 3 M0.5 6 L2.5 8 L4.5 6" stroke="#d0d0d0" fill="none"/></svg>
<div class="t" style="left:1274.7px;top:560.38px;font-size:9px;color:#f0f0f0;font-weight:bold;-webkit-text-stroke:0;transform:scaleX(0.884);transform-origin:0 0;">Paragraph Styles</div>
<div class="a" style="left:1433.5px;top:561.5px;width:8px;height:6px;background:#7c7c7c;"></div>
<svg class="a" style="left:1433.5px;top:561.5px;" width="8" height="6" viewBox="0 0 8 6"><path d="M0 2h8 M0 4h8" stroke="#6a6a6a" stroke-width="0.8"/></svg>
<div class="t" style="left:1265px;top:580.80px;font-size:8.5px;color:#dcdcdc;transform:scaleX(0.888);transform-origin:0 0;">[Basic Paragraph]</div>
<div class="t" style="left:1407px;top:579.80px;font-size:8.5px;color:#c0c0c0;transform:scaleX(0.902);transform-origin:0 0;">[a+]</div>
<svg class="a" style="left:1432px;top:578px;" width="7" height="10" viewBox="0 0 7 10"><path d="M5 0 L1 5 L5 5 L2 10" stroke="#bdbdbd" stroke-width="1.2" fill="none"/></svg>
<div class="a" style="left:1261px;top:595px;width:184px;height:14.5px;background:#4c6a8b;"></div>
<div class="t" style="left:1287.5px;top:598.10px;font-size:8.5px;color:#ffffff;font-weight:bold;-webkit-text-stroke:0;transform:scaleX(0.921);transform-origin:0 0;">[Basic Paragraph]</div>
<div class="t" style="left:1287px;top:614.80px;font-size:8.5px;color:#dcdcdc;transform:scaleX(0.881);transform-origin:0 0;">Heading on all pages Project 1</div>
<svg class="a" style="left:1266px;top:630px;" width="12" height="11" viewBox="0 0 12 11"><rect x="1" y="2" width="9" height="8" stroke="#ccc" fill="none"/><path d="M3 6 h5 M6 4 l2 2 l-2 2" stroke="#ccc"/></svg>
<svg class="a" style="left:1326px;top:631px;" width="14" height="9" viewBox="0 0 14 9"><path d="M0 1 H4 L5 2 H10 V8 H0 Z" fill="#c8c8c8"/><circle cx="11" cy="2" r="2" fill="#2e86f0"/></svg>
<svg class="a" style="left:1355px;top:631px;" width="11" height="9" viewBox="0 0 11 9"><path d="M0 1 H4 L5 2 H10 V8 H0 Z" fill="#c8c8c8"/></svg>
<svg class="a" style="left:1376px;top:631px;" width="12" height="9" viewBox="0 0 12 9"><path d="M4 1h5 M5 1v8 M7 1v8 M4 1a2 2 0 0 0 0 4h1" stroke="#707070" fill="none"/><path d="M9 8 L12 4" stroke="#707070"/></svg>
<svg class="a" style="left:1398px;top:630px;" width="10" height="10" viewBox="0 0 10 10"><rect x="0.5" y="0.5" width="9" height="9" stroke="#cfcfcf" fill="none"/><path d="M5 2.5v5 M2.5 5h5" stroke="#cfcfcf"/></svg>
<svg class="a" style="left:1418px;top:630px;" width="9" height="10" viewBox="0 0 9 10"><path d="M0 1.5h9 M1.5 2 V9.5 H7.5 V2 M3.5 0.5h2" stroke="#707070" fill="none"/></svg>
<div class="a" style="left:1261px;top:646px;width:184px;height:1px;background:#3d3d3d;"></div>
<div class="a" style="left:1261px;top:647px;width:184px;height:45px;background:#535353;"></div>
<div class="a" style="left:1309px;top:647px;width:136px;height:20px;background:#424242;"></div>
<div class="a" style="left:1360px;top:649px;width:1px;height:16px;background:#3a3a3a;"></div>
<div class="a" style="left:1420px;top:649px;width:1px;height:16px;background:#3a3a3a;"></div>
<svg class="a" style="left:1266px;top:654px;" width="5" height="9" viewBox="0 0 5 9"><path d="M0.5 3 L2.5 1 L4.5 3 M0.5 6 L2.5 8 L4.5 6" stroke="#d0d0d0" fill="none"/></svg>
<div class="t" style="left:1274px;top:653.38px;font-size:9px;color:#f0f0f0;font-weight:bold;-webkit-text-stroke:0;transform:scaleX(0.928);transform-origin:0 0;">Stroke</div>
<div class="t" style="left:1318px;top:653.38px;font-size:9px;color:#bdbdbd;transform:scaleX(0.923);transform-origin:0 0;">Swatches</div>
<div class="t" style="left:1367px;top:653.38px;font-size:9px;color:#bdbdbd;transform:scaleX(0.920);transform-origin:0 0;">CC Libraries</div>
<div class="a" style="left:1433.5px;top:654.5px;width:8px;height:6px;background:#7c7c7c;"></div>
<svg class="a" style="left:1433.5px;top:654.5px;" width="8" height="6" viewBox="0 0 8 6"><path d="M0 2h8 M0 4h8" stroke="#6a6a6a" stroke-width="0.8"/></svg>
<div class="t" style="left:1287px;top:677.30px;font-size:8.5px;color:#dcdcdc;transform:scaleX(0.907);transform-origin:0 0;">Weight:</div>
<div class="a" style="left:1317px;top:672px;width:13px;height:16px;background:#4a4a4a;border:1px solid #6a6a6a;border-radius:2px 0 0 2px"></div>
<svg class="a" style="left:1320px;top:674px;" width="7" height="4" viewBox="0 0 7 4"><path d="M0.5 3.5 L3.5 0.5 L6.5 3.5" stroke="#aaa" fill="none"/></svg>
<svg class="a" style="left:1320px;top:682px;" width="7" height="4" viewBox="0 0 7 4"><path d="M0.5 0.5 L3.5 3.5 L6.5 0.5" stroke="#aaa" fill="none"/></svg>
<div class="a" style="left:1330px;top:672px;width:40px;height:16px;background:#4a4a4a;border:1px solid #6a6a6a"></div>
<div class="a" style="left:1369px;top:672px;width:14px;height:16px;background:#4a4a4a;border:1px solid #6a6a6a;border-radius:0 2px 2px 0"></div>
<svg class="a" style="left:1372px;top:678px;" width="8" height="5" viewBox="0 0 8 5"><path d="M1 1 L4 4 L7 1" stroke="#bbb" stroke-width="1.0" fill="none"/></svg>
<div class="a" style="left:1261px;top:692px;width:184px;height:1px;background:#3d3d3d;"></div>
<div class="a" style="left:1261px;top:693px;width:184px;height:91px;background:#535353;"></div>
<div class="a" style="left:1334px;top:693px;width:111px;height:20px;background:#424242;"></div>
<div class="a" style="left:1391px;top:695px;width:1px;height:16px;background:#3a3a3a;"></div>
<svg class="a" style="left:1266px;top:700px;" width="5" height="9" viewBox="0 0 5 9"><path d="M0.5 3 L2.5 1 L4.5 3 M0.5 6 L2.5 8 L4.5 6" stroke="#d0d0d0" fill="none"/></svg>
<div class="t" style="left:1274px;top:700.58px;font-size:9px;color:#f0f0f0;font-weight:bold;-webkit-text-stroke:0;transform:scaleX(0.877);transform-origin:0 0;">Object Styles</div>
<div class="t" style="left:1342px;top:700.58px;font-size:9px;color:#bdbdbd;transform:scaleX(0.991);transform-origin:0 0;">Text Wrap</div>
<div class="a" style="left:1433.5px;top:701.5px;width:8px;height:6px;background:#7c7c7c;"></div>
<svg class="a" style="left:1433.5px;top:701.5px;" width="8" height="6" viewBox="0 0 8 6"><path d="M0 2h8 M0 4h8" stroke="#6a6a6a" stroke-width="0.8"/></svg>
<div class="t" style="left:1265px;top:720.50px;font-size:8.5px;color:#d8d8d8;transform:scaleX(0.896);transform-origin:0 0;">[Basic Graphics Frame]+</div>
<svg class="a" style="left:1432px;top:717px;" width="7" height="10" viewBox="0 0 7 10"><path d="M5 0 L1 5 L5 5 L2 10" stroke="#bdbdbd" stroke-width="1.2" fill="none"/></svg>
<div class="t" style="left:1290px;top:737.30px;font-size:8.5px;color:#d8d8d8;transform:scaleX(0.879);transform-origin:0 0;">[None]</div>
<svg class="a" style="left:1417px;top:736px;" width="10" height="10" viewBox="0 0 10 10"><path d="M1 9 L9 1 M2 1 L9 8" stroke="#cfcfcf" stroke-width="1.3"/></svg>
<div class="a" style="left:1261px;top:749.5px;width:174px;height:16.5px;background:#4c6a8b;"></div>
<div class="t" style="left:1290px;top:753.80px;font-size:8.5px;color:#ffffff;font-weight:bold;-webkit-text-stroke:0;transform:scaleX(0.926);transform-origin:0 0;">[Basic Graphics Frame]+</div>
<svg class="a" style="left:1417px;top:753px;" width="10" height="10" viewBox="0 0 10 10"><rect x="0.5" y="0.5" width="9" height="9" stroke="#dfe7f0" stroke-dasharray="2 1" fill="none"/></svg>
<div class="a" style="left:1435px;top:733px;width:10px;height:40px;background:#4d4d4d;"></div>
<svg class="a" style="left:1437px;top:736px;" width="7" height="4" viewBox="0 0 7 4"><path d="M0.5 3.5 L3.5 0.5 L6.5 3.5" stroke="#777" fill="none"/></svg>
<svg class="a" style="left:1437px;top:760px;" width="7" height="4" viewBox="0 0 7 4"><path d="M0.5 0.5 L3.5 3.5 L6.5 0.5" stroke="#777" fill="none"/></svg>
<svg class="a" style="left:1333px;top:771px;" width="11" height="9" viewBox="0 0 11 9"><path d="M0 1 H4 L5 2 H10 V8 H0 Z" fill="#c8c8c8"/></svg>
<svg class="a" style="left:1354px;top:770px;" width="15" height="11" viewBox="0 0 15 11"><rect x="0.5" y="2.5" width="7" height="7" stroke="#c8c8c8" fill="#333"/><rect x="2" y="0.5" width="5" height="5" stroke="#c8c8c8" fill="none"/><path d="M9 5h3 a2 2 0 0 1 0 4 h-2" stroke="#888" fill="none"/></svg>
<svg class="a" style="left:1374px;top:770px;" width="14" height="10" viewBox="0 0 14 10"><rect x="0.5" y="0.5" width="8" height="8" stroke="#c8c8c8" stroke-dasharray="2 1" fill="none"/><path d="M9 8 L12 5" stroke="#999" stroke-width="1.5"/></svg>
<svg class="a" style="left:1398px;top:770px;" width="10" height="10" viewBox="0 0 10 10"><rect x="0.5" y="0.5" width="9" height="9" stroke="#cfcfcf" fill="none"/><path d="M5 2.5v5 M2.5 5h5" stroke="#cfcfcf"/></svg>
<svg class="a" style="left:1418px;top:770px;" width="9" height="10" viewBox="0 0 9 10"><path d="M0 1.5h9 M1.5 2 V9.5 H7.5 V2 M3.5 0.5h2" stroke="#707070" fill="none"/></svg>
<div class="a" style="left:8px;top:771px;width:1209px;height:1px;background:#c8c8c8;"></div>
<div class="a" style="left:0px;top:772px;width:1228px;height:1px;background:#404040;"></div>
<div class="a" style="left:0px;top:773px;width:1228px;height:10px;background:#535353;"></div>
<div class="t" style="left:8px;top:774.30px;font-size:8.5px;color:#e0e0e0;transform:scaleX(0.814);transform-origin:0 0;">5%</div>
<svg class="a" style="left:39px;top:776px;" width="8" height="5" viewBox="0 0 8 5"><path d="M1 1 L4 4 L7 1" stroke="#bdbdbd" stroke-width="1.0" fill="none"/></svg>
<svg class="a" style="left:56px;top:775px;" width="7" height="7" viewBox="0 0 7 7"><rect x="0" y="0" width="1.5" height="7" fill="#bdbdbd"/><path d="M7 0 L2.5 3.5 L7 7 Z" fill="#bdbdbd"/></svg>
<svg class="a" style="left:72px;top:775px;" width="5" height="7" viewBox="0 0 5 7"><path d="M5 0 L0.5 3.5 L5 7 Z" fill="#bdbdbd"/></svg>
<div class="a" style="left:84px;top:773px;width:56px;height:10px;background:#464646;"></div>
<div class="t" style="left:87px;top:774.30px;font-size:8.5px;color:#e6e6e6;transform:scaleX(0.899);transform-origin:0 0;">13</div>
<div class="a" style="left:139px;top:773px;width:13px;height:10px;background:#4a4a4a;border-left:1px solid #3e3e3e"></div>
<svg class="a" style="left:142px;top:776px;" width="8" height="5" viewBox="0 0 8 5"><path d="M1 1 L4 4 L7 1" stroke="#bdbdbd" stroke-width="1.0" fill="none"/></svg>
<svg class="a" style="left:162px;top:775px;" width="5" height="7" viewBox="0 0 5 7"><path d="M0 0 L4.5 3.5 L0 7 Z" fill="#bdbdbd"/></svg>
<svg class="a" style="left:177px;top:775px;" width="7" height="7" viewBox="0 0 7 7"><path d="M0 0 L4.5 3.5 L0 7 Z" fill="#bdbdbd"/><rect x="5.5" y="0" width="1.5" height="7" fill="#bdbdbd"/></svg>
<svg class="a" style="left:197px;top:774px;" width="12" height="10" viewBox="0 0 12 10"><path d="M1.5 9 V5 a4 4 0 0 1 8 0 V9" stroke="#bdbdbd" stroke-width="1.6" fill="none"/><rect x="10.5" y="8.5" width="1.5" height="1.5" fill="#bdbdbd"/></svg>
<div class="t" style="left:221px;top:774.30px;font-size:8.5px;color:#d8d8d8;transform:scaleX(0.923);transform-origin:0 0;">[Basic] (working)</div>
<svg class="a" style="left:297px;top:776px;" width="8" height="5" viewBox="0 0 8 5"><path d="M1 1 L4 4 L7 1" stroke="#bdbdbd" stroke-width="1.0" fill="none"/></svg>
<div class="a" style="left:315.5px;top:774px;width:7px;height:7px;background:#19b21a;border-radius:50%"></div>
<div class="t" style="left:328px;top:774.30px;font-size:8.5px;color:#d8d8d8;transform:scaleX(0.875);transform-origin:0 0;">No errors</div>
<svg class="a" style="left:374px;top:776px;" width="8" height="5" viewBox="0 0 8 5"><path d="M1 1 L4 4 L7 1" stroke="#bdbdbd" stroke-width="1.0" fill="none"/></svg>
<svg class="a" style="left:1203px;top:775px;" width="13" height="9" viewBox="0 0 13 9"><rect x="0.5" y="0.5" width="5.5" height="8" stroke="#cfcfcf" fill="none"/><rect x="6.5" y="0.5" width="5.5" height="8" stroke="#cfcfcf" fill="none"/></svg>
<div class="a" style="left:0px;top:783px;width:1445px;height:3px;background:#2f2f2f;"></div>
</body></html>
